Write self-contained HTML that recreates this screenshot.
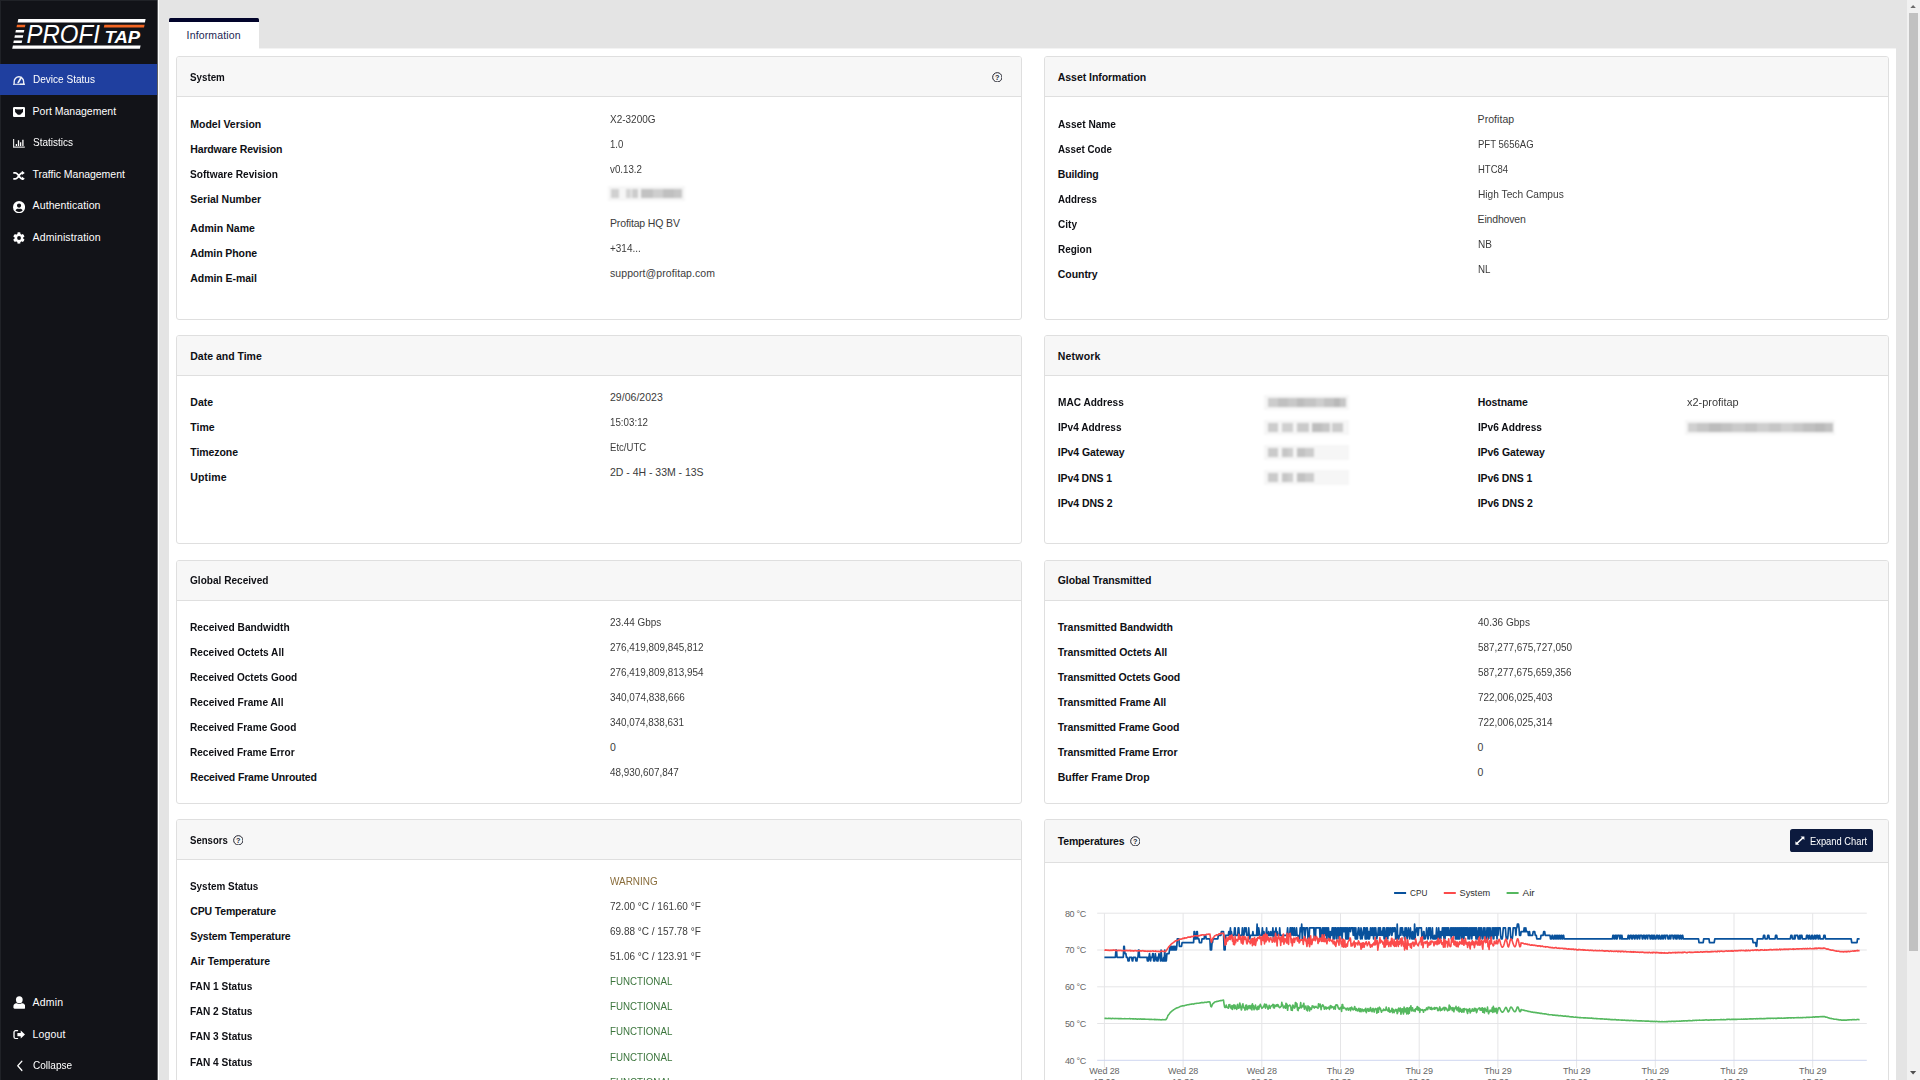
<!DOCTYPE html>
<html lang="en">
<head>
<meta charset="utf-8">
<title>Profitap - Device Status</title>
<style>
html,body{margin:0;padding:0;}
body{width:1920px;height:1080px;overflow:hidden;background:#e4e4e4;font-family:"Liberation Sans",sans-serif;font-size:10.5px;color:#333;}
#app{position:relative;width:1920px;height:1080px;overflow:hidden;background:#e4e4e4;}
.t{position:absolute;white-space:nowrap;margin:0;padding:0;font-size:10.5px;line-height:12px;height:12px;transform-origin:0 50%;}
.abs{position:absolute;}
#side{position:absolute;left:0;top:0;width:157px;height:1080px;background:#121318;box-shadow:inset 1px 1px 0 #202227;}
#sideedge{position:absolute;left:157px;top:0;width:2px;height:1080px;background:linear-gradient(90deg,#5f6063 0,#5f6063 50%,#fcfcfc 50%,#fcfcfc 100%);}
.nav{position:absolute;left:0;width:157px;height:31.5px;}
.nav.on{background:#1f3f9f;}
.nav svg{position:absolute;}
.nt{color:#fff;}
#tab{position:absolute;left:169px;top:18px;width:90px;height:31px;background:#fff;border-top:4px solid #02042b;box-sizing:border-box;border-radius:1.5px 1.5px 0 0;}
#panel{position:absolute;left:169px;top:48px;width:1727px;height:1040px;background:#fff;border-top:1px solid #f3f3f3;box-sizing:border-box;}
.card{position:absolute;box-sizing:border-box;border:1px solid #dfdfdf;border-radius:3px;background:#fff;overflow:hidden;}
.ch{position:absolute;left:0;top:0;right:0;box-sizing:border-box;background:#f7f7f7;border-bottom:1px solid #dfdfdf;}
.hd{font-weight:bold;color:#0e0f14;}
.lb{font-weight:bold;color:#0e0f14;}
.vl{color:#3b3b3b;}
.warn{color:#8a6d3b;}
.ok{color:#3c763d;}
.blur{position:absolute;filter:blur(1.3px);}
.blur i{position:absolute;display:block;background:#b9b9b9;}
#sbt{position:absolute;left:1907px;top:0;width:13px;height:1080px;background:#f1f1f1;}
#sbth{position:absolute;left:1909px;top:13px;width:9px;height:938px;background:#c1c1c1;}

</style>
</head>
<body>
<div id="app">
<div id="side">
<svg class="abs" style="left:0;top:0" width="157" height="62" viewBox="0 0 157 62">
<polygon points="18.3,19.1 145.6,19.1 144.9,22.4 17.6,22.4" fill="#fff"/>
<polygon points="12.9,45.6 140.6,45.6 139.9,48.8 12.2,48.8" fill="#fff"/>
<polygon points="17.0,24.8 25.4,24.8 24.9,27.3 16.5,27.3" fill="#f26522"/>
<polygon points="15.9,30.0 24.3,30.0 23.8,32.6 15.4,32.6" fill="#fff"/>
<polygon points="14.9,35.2 23.3,35.2 22.8,37.7 14.4,37.7" fill="#fff"/>
<polygon points="13.8,40.4 22.2,40.4 21.7,42.9 13.3,42.9" fill="#fff"/>
<polygon points="104.4,24.8 144.6,24.8 144.0,27.6 103.8,27.6" fill="#f26522"/>
<text x="26.6" y="43.2" font-family="'Liberation Sans',sans-serif" font-style="italic" font-size="25.6" fill="#fff" textLength="73.2" lengthAdjust="spacingAndGlyphs">PROFI</text>
<text x="104.6" y="42.9" font-family="'Liberation Sans',sans-serif" font-style="italic" font-weight="bold" font-size="16.6" fill="#fff" textLength="35.6" lengthAdjust="spacingAndGlyphs">TAP</text>
</svg>
<div class="nav on" style="top:63.9px;height:31.3px"></div>
<svg class="abs" style="left:13.0px;top:75.8px;opacity:0.92" width="11.8" height="9.1" viewBox="0 0 11.8 9.1" preserveAspectRatio="none"><path d="M1.15 8.3V5.7a4.75 4.95 0 0 1 9.5 0v2.6" fill="none" stroke="#fff" stroke-width="1.35"/><path d="M5.2 6.7 8.2 1.5" stroke="#fff" stroke-width="1.7" stroke-linecap="round"/><path d="M0 8.4h11.8" stroke="#fff" stroke-width="1.2" opacity=".8"/><path d="M6.6 8.3h5.2" stroke="#fff" stroke-width="1.5"/></svg><span class="t nt" style="left:32.6px;top:73px;transform:scaleX(0.956);">Device Status</span>
<svg class="abs" style="left:13.0px;top:106.8px" width="12.1" height="10.1" viewBox="0 0 12.1 10.1" preserveAspectRatio="none"><path d="M1.3 0h9.5a1.3 1.3 0 0 1 1.3 1.3v7.5a1.3 1.3 0 0 1-1.3 1.3H1.3A1.3 1.3 0 0 1 0 8.8V1.3A1.3 1.3 0 0 1 1.3 0zM2.1 2v3.1l1.5 1.5 1.3 1.2h2.3l1.3-1.2 1.5-1.5V2z" fill="#fff" fill-rule="evenodd"/><path d="M3.2 2h5.7v.9H3.2z" fill="#fff" opacity=".45"/></svg><span class="t nt" style="left:32.6px;top:105px;letter-spacing:0.00px;">Port Management</span>
<svg class="abs" style="left:13.0px;top:139.2px" width="11.8" height="8.7" viewBox="0 0 11.8 8.7" preserveAspectRatio="none"><path d="M.6 0v8.1h11.2" fill="none" stroke="#fff" stroke-width="1.2" opacity=".85"/><path d="M3.4 7.1V4.9M5.5 7.1V1.3M7.6 7.1V3.2M9.9 7.1V.8" stroke="#fff" stroke-width="1.3"/></svg><span class="t nt" style="left:32.6px;top:136px;transform:scaleX(0.955);">Statistics</span>
<svg class="abs" style="left:13.0px;top:170.5px" width="11.8" height="9.7" viewBox="0 0 11.8 9.7" preserveAspectRatio="none"><path d="M.3 1.9h1.9c1.1 0 1.7.4 2.4 1.3l2.5 3.3c.6.8 1.1 1.3 2.1 1.3h.5M.3 7.8h1.9c1.1 0 1.7-.4 2.4-1.3l2.5-3.3c.6-.8 1.1-1.3 2.1-1.3h.5" fill="none" stroke="#fff" stroke-width="1.8"/><path d="M8.8 -.3l3 2.2-3 2.2zM8.8 5.6l3 2.2-3 2.2z" fill="#fff"/></svg><span class="t nt" style="left:32.6px;top:168px;letter-spacing:-0.03px;">Traffic Management</span>
<svg class="abs" style="left:13.0px;top:200.5px" width="12.1" height="12.3" viewBox="0 0 24 24" preserveAspectRatio="none"><path d="M12 0a12 12 0 1 0 0 24 12 12 0 0 0 0-24zm0 4.7a4.2 4.2 0 1 1 0 8.4 4.2 4.2 0 0 1 0-8.4zm0 16.6c-2.9 0-5.4-1.3-7.1-3.3.9-1.7 2.7-2.9 4.8-2.9.1 0 .2 0 .4.1.6.2 1.2.3 1.9.3s1.3-.1 1.9-.3c.1 0 .2-.1.4-.1 2.1 0 3.9 1.2 4.8 2.9-1.7 2-4.2 3.3-7.1 3.3z" fill="#fff" fill-rule="evenodd"/></svg><span class="t nt" style="left:32.6px;top:199px;letter-spacing:0.10px;">Authentication</span>
<svg class="abs" style="left:13.0px;top:232.2px" width="12.1" height="12.0" viewBox="0 0 24 24" preserveAspectRatio="none"><path d="M22.3 14.6l-2-1.1c.2-1 .2-2 0-3l2-1.1c.2-.1.3-.4.3-.7-.5-1.7-1.4-3.2-2.6-4.4-.2-.2-.5-.2-.7-.1l-2 1.1c-.8-.7-1.7-1.2-2.6-1.5V1.5c0-.3-.2-.5-.4-.6-1.7-.4-3.4-.4-5.1 0-.3.1-.4.3-.4.6v2.3c-1 .3-1.9.9-2.6 1.5l-2-1.1c-.2-.1-.5-.1-.7.1C2.2 5.5 1.3 7 .8 8.7c-.1.3 0 .5.3.7l2 1.1c-.2 1-.2 2 0 3l-2 1.1c-.2.1-.3.4-.3.7.5 1.7 1.4 3.2 2.6 4.4.2.2.5.2.7.1l2-1.1c.8.7 1.7 1.2 2.6 1.5v2.3c0 .3.2.5.4.6 1.7.4 3.4.4 5.1 0 .3-.1.4-.3.4-.6v-2.3c1-.3 1.9-.9 2.6-1.5l2 1.1c.2.1.5.1.7-.1 1.2-1.3 2.1-2.8 2.6-4.4.1-.3 0-.6-.2-.7zM12 15.8a3.8 3.8 0 1 1 0-7.6 3.8 3.8 0 0 1 0 7.6z" fill="#fff" fill-rule="evenodd"/></svg><span class="t nt" style="left:32.6px;top:231px;letter-spacing:0.11px;">Administration</span>
<svg class="abs" style="left:12.8px;top:996.0px" width="12.6" height="13.0" viewBox="0 0 24 24" preserveAspectRatio="none"><ellipse cx="12" cy="7" rx="6.4" ry="6.6" fill="#fff"/><path d="M.8 21.4v-2.2c0-3.1 2.5-5.6 5.6-5.6h.8c1.5.7 3.1 1 4.8 1s3.3-.3 4.8-1h.8c3.1 0 5.6 2.5 5.6 5.6v2.2c0 1.2-1 2.2-2.2 2.2H3c-1.2 0-2.2-1-2.2-2.2z" fill="#fff"/></svg><span class="t nt" style="left:32.6px;top:996px;letter-spacing:0.16px;">Admin</span>
<svg class="abs" style="left:13.0px;top:1028.6px" width="12.2" height="11.2" viewBox="0 0 24 24" preserveAspectRatio="none"><path d="M9 3.6H5.2A3.2 3.2 0 0 0 2 6.8v10.4a3.2 3.2 0 0 0 3.2 3.2H9" fill="none" stroke="#fff" stroke-width="2.6" stroke-linecap="round"/><path d="M15.2 3.4 23.6 12l-8.4 8.6v-5H8.6V8.4h6.6z" fill="#fff"/></svg><span class="t nt" style="left:32.6px;top:1028px;letter-spacing:0.16px;">Logout</span>
<svg class="abs" style="left:14.6px;top:1060.4px" width="9.4" height="11.6" viewBox="0 0 24 24" preserveAspectRatio="none"><path d="M17.5 2.5 7 12l10.5 9.5" fill="none" stroke="#fff" stroke-width="3.2" stroke-linecap="round" stroke-linejoin="round"/></svg><span class="t nt" style="left:32.6px;top:1059px;transform:scaleX(0.957);">Collapse</span>
</div>
<div id="sideedge"></div>
<div id="panel"></div>
<div id="tab"></div>
<span class="t" style="left:186.6px;top:29px;color:#1d2553;letter-spacing:0.15px;">Information</span>
<div class="card" style="left:176px;top:56px;width:846px;height:264px"><div class="ch" style="height:40px"></div></div>
<span class="t hd" style="left:190.3px;top:71px;transform:scaleX(0.932);">System</span>
<svg class="abs" style="left:991.7px;top:71.7px" width="10.6" height="10.6" viewBox="0 0 21.2 21.2"><circle cx="10.6" cy="10.6" r="9.3" fill="none" stroke="#23242f" stroke-width="2"/><text x="10.6" y="15.9" text-anchor="middle" font-family="'Liberation Sans',sans-serif" font-weight="bold" font-size="14.6" fill="#23242f">?</text></svg>
<span class="t lb" style="left:190.3px;top:118px;letter-spacing:-0.02px;">Model Version</span><span class="t vl" style="left:610.0px;top:113px;transform:scaleX(0.951);">X2-3200G</span>
<span class="t lb" style="left:190.3px;top:143px;letter-spacing:-0.15px;">Hardware Revision</span><span class="t vl" style="left:610.0px;top:138px;transform:scaleX(0.911);">1.0</span>
<span class="t lb" style="left:190.3px;top:168px;transform:scaleX(0.967);">Software Revision</span><span class="t vl" style="left:610.0px;top:163px;transform:scaleX(0.929);">v0.13.2</span>
<span class="t lb" style="left:190.3px;top:193px;letter-spacing:-0.03px;">Serial Number</span><div class="blur" style="left:608px;top:186.1px;width:77px;height:15px"><i style="left:0;top:0;width:77px;height:15px;background:#f6f6f6"></i><i style="left:2.6px;top:3.4px;width:8.0px;height:8.6px;background:rgb(208,208,208)"></i><i style="left:18.3px;top:3.4px;width:5.2px;height:8.6px;background:rgb(212,212,212)"></i><i style="left:23.5px;top:3.4px;width:6.3px;height:8.6px;background:rgb(204,204,204)"></i><i style="left:33.3px;top:3.4px;width:11.7px;height:8.6px;background:rgb(194,194,194)"></i><i style="left:45.0px;top:3.4px;width:10.0px;height:8.6px;background:rgb(206,206,206)"></i><i style="left:55.0px;top:3.4px;width:11.0px;height:8.6px;background:rgb(192,192,192)"></i><i style="left:66.0px;top:3.4px;width:8.4px;height:8.6px;background:rgb(198,198,198)"></i></div>
<span class="t lb" style="left:190.3px;top:222px;letter-spacing:0.05px;">Admin Name</span><span class="t vl" style="left:610.0px;top:217px;letter-spacing:-0.14px;">Profitap HQ BV</span>
<span class="t lb" style="left:190.3px;top:247px;letter-spacing:-0.09px;">Admin Phone</span><span class="t vl" style="left:610.0px;top:242px;transform:scaleX(0.948);">+314...</span>
<span class="t lb" style="left:190.3px;top:272px;letter-spacing:-0.05px;">Admin E-mail</span><span class="t vl" style="left:610.0px;top:267px;letter-spacing:0.08px;">support@profitap.com</span>
<div class="card" style="left:1044px;top:56px;width:845px;height:264px"><div class="ch" style="height:40px"></div></div>
<span class="t hd" style="left:1057.8px;top:71px;letter-spacing:-0.05px;">Asset Information</span>
<span class="t lb" style="left:1057.8px;top:118px;transform:scaleX(0.965);">Asset Name</span><span class="t vl" style="left:1477.6px;top:113px;letter-spacing:0.06px;">Profitap</span>
<span class="t lb" style="left:1057.8px;top:143px;transform:scaleX(0.933);">Asset Code</span><span class="t vl" style="left:1477.6px;top:138px;transform:scaleX(0.910);">PFT 5656AG</span>
<span class="t lb" style="left:1057.8px;top:168px;letter-spacing:-0.17px;">Building</span><span class="t vl" style="left:1477.6px;top:163px;transform:scaleX(0.905);">HTC84</span>
<span class="t lb" style="left:1057.8px;top:193px;transform:scaleX(0.926);">Address</span><span class="t vl" style="left:1477.6px;top:188px;transform:scaleX(0.969);">High Tech Campus</span>
<span class="t lb" style="left:1057.8px;top:218px;transform:scaleX(0.958);">City</span><span class="t vl" style="left:1477.6px;top:213px;letter-spacing:-0.18px;">Eindhoven</span>
<span class="t lb" style="left:1057.8px;top:243px;transform:scaleX(0.950);">Region</span><span class="t vl" style="left:1477.6px;top:238px;transform:scaleX(0.953);">NB</span>
<span class="t lb" style="left:1057.8px;top:268px;letter-spacing:-0.06px;">Country</span><span class="t vl" style="left:1477.6px;top:263px;transform:scaleX(0.931);">NL</span>
<div class="card" style="left:176px;top:335px;width:846px;height:209px"><div class="ch" style="height:40px"></div></div>
<span class="t hd" style="left:190.3px;top:350px;letter-spacing:-0.01px;">Date and Time</span>
<span class="t lb" style="left:190.3px;top:396px;letter-spacing:0.05px;">Date</span><span class="t vl" style="left:610.0px;top:391px;letter-spacing:0.02px;">29/06/2023</span>
<span class="t lb" style="left:190.3px;top:421px;letter-spacing:-0.01px;">Time</span><span class="t vl" style="left:610.0px;top:416px;transform:scaleX(0.930);">15:03:12</span>
<span class="t lb" style="left:190.3px;top:446px;letter-spacing:-0.08px;">Timezone</span><span class="t vl" style="left:610.0px;top:441px;transform:scaleX(0.913);">Etc/UTC</span>
<span class="t lb" style="left:190.3px;top:471px;letter-spacing:0.12px;">Uptime</span><span class="t vl" style="left:610.0px;top:466px;letter-spacing:-0.02px;">2D - 4H - 33M - 13S</span>
<div class="card" style="left:1044px;top:335px;width:845px;height:209px"><div class="ch" style="height:40px"></div></div>
<span class="t hd" style="left:1057.8px;top:350px;letter-spacing:0.20px;">Network</span>
<span class="t lb" style="left:1057.8px;top:396px;transform:scaleX(0.961);">MAC Address</span><div class="blur" style="left:1264px;top:394.8px;width:85px;height:15px"><i style="left:0;top:0;width:85px;height:15px;background:#f6f6f6"></i><i style="left:3.5px;top:3.4px;width:10.5px;height:8.6px;background:rgb(204,204,204)"></i><i style="left:14.0px;top:3.4px;width:10.0px;height:8.6px;background:rgb(192,192,192)"></i><i style="left:24.0px;top:3.4px;width:9.0px;height:8.6px;background:rgb(200,200,200)"></i><i style="left:33.0px;top:3.4px;width:7.0px;height:8.6px;background:rgb(188,188,188)"></i><i style="left:40.0px;top:3.4px;width:12.0px;height:8.6px;background:rgb(196,196,196)"></i><i style="left:52.0px;top:3.4px;width:8.0px;height:8.6px;background:rgb(206,206,206)"></i><i style="left:60.0px;top:3.4px;width:10.0px;height:8.6px;background:rgb(194,194,194)"></i><i style="left:70.0px;top:3.4px;width:6.0px;height:8.6px;background:rgb(184,184,184)"></i><i style="left:76.0px;top:3.4px;width:5.5px;height:8.6px;background:rgb(198,198,198)"></i></div>
<span class="t lb" style="left:1057.8px;top:421px;transform:scaleX(0.960);">IPv4 Address</span><div class="blur" style="left:1264px;top:419.9px;width:85px;height:15px"><i style="left:0;top:0;width:85px;height:15px;background:#f6f6f6"></i><i style="left:3.5px;top:3.4px;width:10.7px;height:8.6px;background:rgb(204,204,204)"></i><i style="left:17.7px;top:3.4px;width:11.5px;height:8.6px;background:rgb(208,208,208)"></i><i style="left:32.8px;top:3.4px;width:12.4px;height:8.6px;background:rgb(202,202,202)"></i><i style="left:47.8px;top:3.4px;width:10.2px;height:8.6px;background:rgb(190,190,190)"></i><i style="left:58.0px;top:3.4px;width:8.4px;height:8.6px;background:rgb(198,198,198)"></i><i style="left:68.2px;top:3.4px;width:10.6px;height:8.6px;background:rgb(204,204,204)"></i></div>
<span class="t lb" style="left:1057.8px;top:446px;letter-spacing:-0.08px;">IPv4 Gateway</span><div class="blur" style="left:1264px;top:445.0px;width:85px;height:15px"><i style="left:0;top:0;width:85px;height:15px;background:#f6f6f6"></i><i style="left:3.5px;top:3.4px;width:10.7px;height:8.6px;background:rgb(202,202,202)"></i><i style="left:17.7px;top:3.4px;width:6.3px;height:8.6px;background:rgb(198,198,198)"></i><i style="left:24.0px;top:3.4px;width:5.2px;height:8.6px;background:rgb(206,206,206)"></i><i style="left:32.8px;top:3.4px;width:8.2px;height:8.6px;background:rgb(194,194,194)"></i><i style="left:41.0px;top:3.4px;width:8.6px;height:8.6px;background:rgb(204,204,204)"></i></div>
<span class="t lb" style="left:1057.8px;top:472px;letter-spacing:-0.14px;">IPv4 DNS 1</span><div class="blur" style="left:1264px;top:470.1px;width:85px;height:15px"><i style="left:0;top:0;width:85px;height:15px;background:#f6f6f6"></i><i style="left:3.5px;top:3.4px;width:10.7px;height:8.6px;background:rgb(202,202,202)"></i><i style="left:17.7px;top:3.4px;width:6.3px;height:8.6px;background:rgb(198,198,198)"></i><i style="left:24.0px;top:3.4px;width:5.2px;height:8.6px;background:rgb(206,206,206)"></i><i style="left:32.8px;top:3.4px;width:8.2px;height:8.6px;background:rgb(194,194,194)"></i><i style="left:41.0px;top:3.4px;width:8.6px;height:8.6px;background:rgb(204,204,204)"></i></div>
<span class="t lb" style="left:1057.8px;top:497px;letter-spacing:-0.08px;">IPv4 DNS 2</span>
<span class="t lb" style="left:1477.7px;top:396px;letter-spacing:-0.07px;">Hostname</span><span class="t vl" style="left:1687.2px;top:396px;transform:scaleX(1.042);">x2-profitap</span>
<span class="t lb" style="left:1477.7px;top:421px;transform:scaleX(0.968);">IPv6 Address</span><div class="blur" style="left:1684.6px;top:419.9px;width:150.4px;height:15px"><i style="left:0;top:0;width:150.4px;height:15px;background:#f6f6f6"></i><i style="left:3.0px;top:3.4px;width:9.0px;height:8.6px;background:rgb(208,208,208)"></i><i style="left:12.0px;top:3.4px;width:12.0px;height:8.6px;background:rgb(198,198,198)"></i><i style="left:24.0px;top:3.4px;width:12.0px;height:8.6px;background:rgb(188,188,188)"></i><i style="left:36.0px;top:3.4px;width:11.0px;height:8.6px;background:rgb(194,194,194)"></i><i style="left:47.0px;top:3.4px;width:13.0px;height:8.6px;background:rgb(202,202,202)"></i><i style="left:60.0px;top:3.4px;width:12.0px;height:8.6px;background:rgb(196,196,196)"></i><i style="left:72.0px;top:3.4px;width:12.0px;height:8.6px;background:rgb(206,206,206)"></i><i style="left:84.0px;top:3.4px;width:12.0px;height:8.6px;background:rgb(198,198,198)"></i><i style="left:96.0px;top:3.4px;width:12.0px;height:8.6px;background:rgb(208,208,208)"></i><i style="left:108.0px;top:3.4px;width:10.0px;height:8.6px;background:rgb(200,200,200)"></i><i style="left:118.0px;top:3.4px;width:12.0px;height:8.6px;background:rgb(192,192,192)"></i><i style="left:130.0px;top:3.4px;width:10.0px;height:8.6px;background:rgb(186,186,186)"></i><i style="left:140.0px;top:3.4px;width:8.4px;height:8.6px;background:rgb(194,194,194)"></i></div>
<span class="t lb" style="left:1477.7px;top:446px;letter-spacing:-0.05px;">IPv6 Gateway</span>
<span class="t lb" style="left:1477.7px;top:472px;letter-spacing:-0.08px;">IPv6 DNS 1</span>
<span class="t lb" style="left:1477.7px;top:497px;letter-spacing:-0.03px;">IPv6 DNS 2</span>
<div class="card" style="left:176px;top:560px;width:846px;height:244px"><div class="ch" style="height:40px"></div></div>
<span class="t hd" style="left:190.3px;top:574px;transform:scaleX(0.960);">Global Received</span>
<span class="t lb" style="left:190.3px;top:621px;transform:scaleX(0.970);">Received Bandwidth</span><span class="t vl" style="left:610.0px;top:616px;transform:scaleX(0.945);">23.44 Gbps</span>
<span class="t lb" style="left:190.3px;top:646px;transform:scaleX(0.963);">Received Octets All</span><span class="t vl" style="left:610.0px;top:641px;transform:scaleX(0.942);">276,419,809,845,812</span>
<span class="t lb" style="left:190.3px;top:671px;transform:scaleX(0.957);">Received Octets Good</span><span class="t vl" style="left:610.0px;top:666px;transform:scaleX(0.942);">276,419,809,813,954</span>
<span class="t lb" style="left:190.3px;top:696px;transform:scaleX(0.969);">Received Frame All</span><span class="t vl" style="left:610.0px;top:691px;transform:scaleX(0.948);">340,074,838,666</span>
<span class="t lb" style="left:190.3px;top:721px;transform:scaleX(0.959);">Received Frame Good</span><span class="t vl" style="left:610.0px;top:716px;transform:scaleX(0.938);">340,074,838,631</span>
<span class="t lb" style="left:190.3px;top:746px;transform:scaleX(0.958);">Received Frame Error</span><span class="t vl" style="left:610.0px;top:741px;">0</span>
<span class="t lb" style="left:190.3px;top:771px;letter-spacing:-0.16px;">Received Frame Unrouted</span><span class="t vl" style="left:610.0px;top:766px;transform:scaleX(0.942);">48,930,607,847</span>
<div class="card" style="left:1044px;top:560px;width:845px;height:244px"><div class="ch" style="height:40px"></div></div>
<span class="t hd" style="left:1057.8px;top:574px;letter-spacing:-0.09px;">Global Transmitted</span>
<span class="t lb" style="left:1057.8px;top:621px;letter-spacing:-0.05px;">Transmitted Bandwidth</span><span class="t vl" style="left:1477.6px;top:616px;transform:scaleX(0.956);">40.36 Gbps</span>
<span class="t lb" style="left:1057.8px;top:646px;letter-spacing:-0.08px;">Transmitted Octets All</span><span class="t vl" style="left:1477.6px;top:641px;transform:scaleX(0.948);">587,277,675,727,050</span>
<span class="t lb" style="left:1057.8px;top:671px;letter-spacing:-0.14px;">Transmitted Octets Good</span><span class="t vl" style="left:1477.6px;top:666px;transform:scaleX(0.943);">587,277,675,659,356</span>
<span class="t lb" style="left:1057.8px;top:696px;letter-spacing:-0.07px;">Transmitted Frame All</span><span class="t vl" style="left:1477.6px;top:691px;transform:scaleX(0.946);">722,006,025,403</span>
<span class="t lb" style="left:1057.8px;top:721px;letter-spacing:-0.13px;">Transmitted Frame Good</span><span class="t vl" style="left:1477.6px;top:716px;transform:scaleX(0.946);">722,006,025,314</span>
<span class="t lb" style="left:1057.8px;top:746px;letter-spacing:-0.13px;">Transmitted Frame Error</span><span class="t vl" style="left:1477.6px;top:741px;">0</span>
<span class="t lb" style="left:1057.8px;top:771px;letter-spacing:-0.06px;">Buffer Frame Drop</span><span class="t vl" style="left:1477.6px;top:766px;">0</span>
<div class="card" style="left:176px;top:819px;width:846px;height:301px"><div class="ch" style="height:40px"></div></div>
<span class="t hd" style="left:190.3px;top:834px;transform:scaleX(0.912);">Sensors</span>
<svg class="abs" style="left:232.8px;top:834.7px" width="10.6" height="10.6" viewBox="0 0 21.2 21.2"><circle cx="10.6" cy="10.6" r="9.3" fill="none" stroke="#23242f" stroke-width="2"/><text x="10.6" y="15.9" text-anchor="middle" font-family="'Liberation Sans',sans-serif" font-weight="bold" font-size="14.6" fill="#23242f">?</text></svg>
<span class="t lb" style="left:190.3px;top:880px;transform:scaleX(0.944);">System Status</span><span class="t vl warn" style="left:610.0px;top:875px;transform:scaleX(0.947);">WARNING</span>
<span class="t lb" style="left:190.3px;top:905px;letter-spacing:-0.16px;">CPU Temperature</span><span class="t vl" style="left:610.0px;top:900px;transform:scaleX(0.952);">72.00 °C / 161.60 °F</span>
<span class="t lb" style="left:190.3px;top:930px;letter-spacing:-0.16px;">System Temperature</span><span class="t vl" style="left:610.0px;top:925px;transform:scaleX(0.952);">69.88 °C / 157.78 °F</span>
<span class="t lb" style="left:190.3px;top:955px;letter-spacing:-0.04px;">Air Temperature</span><span class="t vl" style="left:610.0px;top:950px;transform:scaleX(0.952);">51.06 °C / 123.91 °F</span>
<span class="t lb" style="left:190.3px;top:980px;transform:scaleX(0.962);">FAN 1 Status</span><span class="t vl ok" style="left:610.0px;top:975px;transform:scaleX(0.929);">FUNCTIONAL</span>
<span class="t lb" style="left:190.3px;top:1005px;transform:scaleX(0.965);">FAN 2 Status</span><span class="t vl ok" style="left:610.0px;top:1000px;transform:scaleX(0.929);">FUNCTIONAL</span>
<span class="t lb" style="left:190.3px;top:1030px;transform:scaleX(0.965);">FAN 3 Status</span><span class="t vl ok" style="left:610.0px;top:1025px;transform:scaleX(0.929);">FUNCTIONAL</span>
<span class="t lb" style="left:190.3px;top:1056px;transform:scaleX(0.965);">FAN 4 Status</span><span class="t vl ok" style="left:610.0px;top:1051px;transform:scaleX(0.929);">FUNCTIONAL</span>
<span class="t lb" style="left:190.3px;top:1081px;transform:scaleX(0.965);">FAN 5 Status</span><span class="t vl ok" style="left:610.0px;top:1076px;transform:scaleX(0.929);">FUNCTIONAL</span>
<div class="card" style="left:1044px;top:819px;width:845px;height:301px"><div class="ch" style="height:42.6px"></div></div>
<span class="t hd" style="left:1057.8px;top:835px;letter-spacing:-0.17px;">Temperatures</span>
<svg class="abs" style="left:1129.7px;top:835.5px" width="10.6" height="10.6" viewBox="0 0 21.2 21.2"><circle cx="10.6" cy="10.6" r="9.3" fill="none" stroke="#23242f" stroke-width="2"/><text x="10.6" y="15.9" text-anchor="middle" font-family="'Liberation Sans',sans-serif" font-weight="bold" font-size="14.6" fill="#23242f">?</text></svg>
<div class="abs" style="left:1789.6px;top:829.3px;width:83.3px;height:22.6px;background:#0c1a3e;border-radius:2.6px;transform:translateZ(0)"></div>
<svg class="abs" style="left:1795.3px;top:836.4px" width="9.8" height="9.2" viewBox="0 0 24 24" preserveAspectRatio="none"><path d="M13.5 1h9.5v9.5l-3.3-3.3-12.5 12.5 3.3 3.3H1v-9.5l3.3 3.3 12.5-12.5z" fill="#fff"/></svg>
<span class="t" style="left:1809.6px;top:835px;color:#fff;transform:scaleX(0.891);">Expand Chart</span>
<div id="sbt"></div><div id="sbth"></div>
<svg class="abs" style="left:1910.4px;top:5px" width="6.2" height="3.4" viewBox="0 0 6.2 3.4"><path d="M0 3.4 3.1 0l3.1 3.4z" fill="#6b6b6b"/></svg>
<svg class="abs" style="left:1910.4px;top:1071.4px" width="6.2" height="3.4" viewBox="0 0 6.2 3.4"><path d="M0 0h6.2L3.1 3.4z" fill="#505050"/></svg>
<svg class="abs" style="left:1045.0px;top:862.0px" width="843.0" height="218.0" viewBox="1045.0 862.0 843.0 218.0" font-family="'Liberation Sans',sans-serif"><g stroke="#e5e5e7" stroke-width="1" fill="none"><path d="M1097.2 913.2H1866.8"/><path d="M1097.2 950.0H1866.8"/><path d="M1097.2 986.8H1866.8"/><path d="M1097.2 1023.5H1866.8"/><path d="M1104.4 913.2V1067.8"/><path d="M1183.1 913.2V1067.8"/><path d="M1261.8 913.2V1067.8"/><path d="M1340.5 913.2V1067.8"/><path d="M1419.2 913.2V1067.8"/><path d="M1497.9 913.2V1067.8"/><path d="M1576.6 913.2V1067.8"/><path d="M1655.3 913.2V1067.8"/><path d="M1734.0 913.2V1067.8"/><path d="M1812.7 913.2V1067.8"/></g><path d="M1097.2 1060.3H1866.8" stroke="#cfd6f0" stroke-width="1" fill="none"/><text x="1086" y="916.6" text-anchor="end" font-size="9" fill="#666" letter-spacing="-0.3">80 °C</text><text x="1086" y="953.4" text-anchor="end" font-size="9" fill="#666" letter-spacing="-0.3">70 °C</text><text x="1086" y="990.1" text-anchor="end" font-size="9" fill="#666" letter-spacing="-0.3">60 °C</text><text x="1086" y="1026.9" text-anchor="end" font-size="9" fill="#666" letter-spacing="-0.3">50 °C</text><text x="1086" y="1063.7" text-anchor="end" font-size="9" fill="#666" letter-spacing="-0.3">40 °C</text><text text-anchor="middle" font-size="9" fill="#666" letter-spacing="-0.1"><tspan x="1104.4" y="1074.4">Wed 28</tspan><tspan x="1104.4" y="1085.2">17:00</tspan></text><text text-anchor="middle" font-size="9" fill="#666" letter-spacing="-0.1"><tspan x="1183.1" y="1074.4">Wed 28</tspan><tspan x="1183.1" y="1085.2">19:30</tspan></text><text text-anchor="middle" font-size="9" fill="#666" letter-spacing="-0.1"><tspan x="1261.8" y="1074.4">Wed 28</tspan><tspan x="1261.8" y="1085.2">22:00</tspan></text><text text-anchor="middle" font-size="9" fill="#666" letter-spacing="-0.1"><tspan x="1340.5" y="1074.4">Thu 29</tspan><tspan x="1340.5" y="1085.2">00:30</tspan></text><text text-anchor="middle" font-size="9" fill="#666" letter-spacing="-0.1"><tspan x="1419.2" y="1074.4">Thu 29</tspan><tspan x="1419.2" y="1085.2">03:00</tspan></text><text text-anchor="middle" font-size="9" fill="#666" letter-spacing="-0.1"><tspan x="1497.9" y="1074.4">Thu 29</tspan><tspan x="1497.9" y="1085.2">05:30</tspan></text><text text-anchor="middle" font-size="9" fill="#666" letter-spacing="-0.1"><tspan x="1576.6" y="1074.4">Thu 29</tspan><tspan x="1576.6" y="1085.2">08:00</tspan></text><text text-anchor="middle" font-size="9" fill="#666" letter-spacing="-0.1"><tspan x="1655.3" y="1074.4">Thu 29</tspan><tspan x="1655.3" y="1085.2">10:30</tspan></text><text text-anchor="middle" font-size="9" fill="#666" letter-spacing="-0.1"><tspan x="1734.0" y="1074.4">Thu 29</tspan><tspan x="1734.0" y="1085.2">13:00</tspan></text><text text-anchor="middle" font-size="9" fill="#666" letter-spacing="-0.1"><tspan x="1812.7" y="1074.4">Thu 29</tspan><tspan x="1812.7" y="1085.2">15:30</tspan></text><path d="M1394.1 893.0h12" stroke="#08519c" stroke-width="2" fill="none"/><text x="1410.0" y="896.4" font-size="9.6" fill="#2e2e2e" textLength="17.3" lengthAdjust="spacingAndGlyphs">CPU</text><path d="M1443.8 893.0h12" stroke="#fb4b4b" stroke-width="2" fill="none"/><text x="1459.5" y="896.4" font-size="9.6" fill="#2e2e2e" textLength="30.7" lengthAdjust="spacingAndGlyphs">System</text><path d="M1506.6 893.0h12" stroke="#55b85f" stroke-width="2" fill="none"/><text x="1522.5" y="896.4" font-size="9.6" fill="#2e2e2e" textLength="12.2" lengthAdjust="spacingAndGlyphs">Air</text><path d="M1104.4 957.3L1115.4 957.3L1115.9 950.0L1116.5 950.0L1117.0 957.3L1123.3 957.3L1123.8 946.3L1124.3 946.3L1124.9 953.7L1125.9 953.7L1126.4 957.3L1127.5 957.3L1128.0 961.0L1129.1 961.0L1129.6 957.3L1131.7 957.3L1132.2 961.0L1132.7 961.0L1133.3 957.3L1135.4 957.3L1135.9 961.0L1136.9 961.0L1137.5 957.3L1138.0 957.3L1138.5 950.0L1139.0 950.0L1139.6 957.3L1146.9 957.3L1147.4 961.0L1148.0 957.3L1148.5 961.0L1149.0 957.3L1149.5 953.7L1150.1 957.3L1150.6 961.0L1151.1 957.3L1152.2 957.3L1152.7 953.7L1153.2 953.7L1153.7 961.0L1154.8 961.0L1155.3 953.7L1155.8 957.3L1156.4 957.3L1156.9 961.0L1157.4 957.3L1157.9 961.0L1158.5 957.3L1159.0 953.7L1159.5 957.3L1160.0 957.3L1160.6 961.0L1161.1 950.0L1161.6 957.3L1162.1 961.0L1163.2 961.0L1163.7 957.3L1164.2 961.0L1164.8 950.0L1165.3 961.0L1166.3 961.0L1166.9 953.7L1169.0 953.7L1169.5 950.0L1170.0 946.3L1170.5 950.0L1171.1 950.0L1171.6 946.3L1172.1 950.0L1172.6 950.0L1173.1 946.3L1173.7 950.0L1174.2 946.3L1174.7 950.0L1175.2 946.3L1175.8 950.0L1176.3 950.0L1176.8 946.3L1177.3 938.9L1178.9 938.9L1179.4 946.3L1181.5 946.3L1182.1 942.6L1193.6 942.6L1194.1 931.6L1194.7 931.6L1195.2 938.9L1196.2 938.9L1196.8 931.6L1197.3 931.6L1197.8 938.9L1198.9 938.9L1199.4 942.6L1201.5 942.6L1202.0 938.9L1204.1 938.9L1204.6 935.3L1205.7 935.3L1206.2 938.9L1209.9 938.9L1210.4 950.0L1211.5 950.0L1212.0 942.6L1212.5 942.6L1213.0 938.9L1217.8 938.9L1218.3 935.3L1220.9 935.3L1221.4 931.6L1223.5 931.6L1224.1 950.0L1225.1 950.0L1225.6 935.3L1228.3 935.3L1228.8 931.6L1229.3 935.3L1229.8 935.3L1230.4 927.9L1230.9 935.3L1231.4 931.6L1231.9 935.3L1234.0 935.3L1234.6 927.9L1235.1 927.9L1235.6 935.3L1237.7 935.3L1238.2 927.9L1238.8 927.9L1239.3 935.3L1241.9 935.3L1242.4 927.9L1242.9 935.3L1244.0 935.3L1244.5 927.9L1245.0 927.9L1245.6 931.6L1246.1 927.9L1246.6 935.3L1248.2 935.3L1248.7 927.9L1249.2 935.3L1249.8 938.9L1250.3 935.3L1252.4 935.3L1252.9 931.6L1253.4 935.3L1256.6 935.3L1257.1 924.2L1257.6 935.3L1258.2 935.3L1258.7 927.9L1259.2 931.6L1259.7 935.3L1261.8 935.3L1262.4 927.9L1262.9 935.3L1263.4 935.3L1263.9 931.6L1264.5 935.3L1266.0 935.3L1266.6 927.9L1267.1 935.3L1268.1 935.3L1268.7 931.6L1269.2 935.3L1270.2 935.3L1270.8 931.6L1271.3 935.3L1272.3 935.3L1272.9 927.9L1273.4 938.9L1273.9 935.3L1274.4 931.6L1275.0 935.3L1275.5 931.6L1276.0 927.9L1276.5 935.3L1277.1 931.6L1277.6 935.3L1279.2 935.3L1279.7 927.9L1280.2 935.3L1287.0 935.3L1287.6 927.9L1288.1 935.3L1289.7 935.3L1290.2 927.9L1291.2 927.9L1291.8 935.3L1292.3 927.9L1292.8 927.9L1293.3 935.3L1293.9 935.3L1294.4 927.9L1294.9 935.3L1296.0 935.3L1296.5 927.9L1297.0 935.3L1298.1 935.3L1298.6 938.9L1299.6 938.9L1300.2 927.9L1300.7 927.9L1301.2 931.6L1301.7 924.2L1302.3 938.9L1302.8 927.9L1304.4 927.9L1304.9 938.9L1305.4 931.6L1305.9 927.9L1307.5 927.9L1308.0 938.9L1309.1 938.9L1309.6 927.9L1313.8 927.9L1314.3 938.9L1314.8 927.9L1315.4 938.9L1315.9 927.9L1319.6 927.9L1320.1 938.9L1320.6 927.9L1321.1 935.3L1321.7 938.9L1322.2 931.6L1322.7 927.9L1323.2 938.9L1323.8 927.9L1324.3 938.9L1324.8 927.9L1325.3 927.9L1325.9 935.3L1326.4 927.9L1326.9 938.9L1327.4 927.9L1328.0 935.3L1328.5 927.9L1329.0 938.9L1329.5 931.6L1330.1 938.9L1330.6 931.6L1331.1 935.3L1331.6 935.3L1332.2 927.9L1332.7 927.9L1333.2 938.9L1333.7 927.9L1334.3 938.9L1334.8 927.9L1335.8 927.9L1336.4 938.9L1336.9 938.9L1337.4 927.9L1337.9 935.3L1338.5 927.9L1339.0 938.9L1339.5 935.3L1340.0 927.9L1340.6 927.9L1341.1 935.3L1341.6 927.9L1342.1 938.9L1342.7 927.9L1343.2 927.9L1343.7 931.6L1344.2 927.9L1344.8 931.6L1345.3 927.9L1345.8 938.9L1346.3 927.9L1346.9 938.9L1347.4 927.9L1347.9 938.9L1348.4 938.9L1349.0 927.9L1350.0 927.9L1350.5 931.6L1351.1 927.9L1352.6 927.9L1353.2 935.3L1353.7 927.9L1354.2 935.3L1354.7 927.9L1355.3 938.9L1355.8 927.9L1356.3 938.9L1357.4 938.9L1357.9 931.6L1358.4 927.9L1358.9 927.9L1359.5 935.3L1360.0 931.6L1360.5 938.9L1361.0 927.9L1361.6 931.6L1362.1 938.9L1362.6 935.3L1363.1 935.3L1363.7 927.9L1364.7 927.9L1365.2 938.9L1365.8 938.9L1366.3 927.9L1366.8 938.9L1367.3 927.9L1367.9 935.3L1368.4 938.9L1368.9 931.6L1369.4 938.9L1370.0 935.3L1370.5 927.9L1371.0 931.6L1371.5 935.3L1372.1 927.9L1372.6 935.3L1373.1 927.9L1373.6 938.9L1374.2 931.6L1374.7 927.9L1375.2 935.3L1375.7 927.9L1376.3 935.3L1376.8 938.9L1377.3 935.3L1377.8 935.3L1378.4 927.9L1378.9 935.3L1379.4 927.9L1379.9 935.3L1380.4 927.9L1381.0 935.3L1381.5 931.6L1382.0 931.6L1382.5 935.3L1383.1 927.9L1383.6 927.9L1384.1 938.9L1384.6 927.9L1385.2 938.9L1385.7 938.9L1386.2 935.3L1386.7 927.9L1387.3 927.9L1387.8 938.9L1388.3 927.9L1388.8 935.3L1389.4 935.3L1389.9 927.9L1390.4 931.6L1390.9 927.9L1391.5 935.3L1392.0 935.3L1392.5 927.9L1393.0 927.9L1393.6 931.6L1394.1 927.9L1395.1 927.9L1395.7 938.9L1396.2 935.3L1396.7 938.9L1397.2 924.2L1397.8 938.9L1398.3 935.3L1398.8 938.9L1399.3 935.3L1399.9 935.3L1400.4 927.9L1400.9 935.3L1401.4 927.9L1402.5 927.9L1403.0 935.3L1403.5 935.3L1404.1 931.6L1404.6 938.9L1405.1 927.9L1405.6 935.3L1406.2 927.9L1406.7 935.3L1407.2 938.9L1407.7 935.3L1408.3 927.9L1408.8 931.6L1409.3 935.3L1409.8 938.9L1410.4 927.9L1410.9 935.3L1411.4 935.3L1411.9 938.9L1412.5 931.6L1413.0 938.9L1413.5 935.3L1414.0 938.9L1414.6 924.2L1415.1 938.9L1415.6 931.6L1416.1 931.6L1416.7 927.9L1417.2 927.9L1417.7 935.3L1418.2 935.3L1418.8 927.9L1421.4 927.9L1421.9 938.9L1423.0 938.9L1423.5 931.6L1424.0 931.6L1424.5 938.9L1425.1 938.9L1425.6 935.3L1426.1 935.3L1426.6 927.9L1427.2 935.3L1427.7 938.9L1428.2 938.9L1428.7 927.9L1429.3 935.3L1429.8 927.9L1430.3 927.9L1430.8 938.9L1431.4 935.3L1431.9 935.3L1432.4 927.9L1432.9 938.9L1434.0 938.9L1434.5 935.3L1435.0 938.9L1435.6 938.9L1436.1 935.3L1436.6 927.9L1437.1 938.9L1438.2 938.9L1438.7 927.9L1439.2 938.9L1439.8 931.6L1440.3 931.6L1440.8 938.9L1441.3 931.6L1441.9 935.3L1442.4 927.9L1442.9 935.3L1443.4 927.9L1444.0 938.9L1444.5 927.9L1445.0 938.9L1445.5 927.9L1446.1 935.3L1446.6 927.9L1447.1 935.3L1447.6 927.9L1448.1 935.3L1448.7 927.9L1449.2 935.3L1449.7 931.6L1450.2 935.3L1450.8 927.9L1451.3 938.9L1451.8 927.9L1452.3 935.3L1452.9 927.9L1453.4 935.3L1453.9 927.9L1454.4 935.3L1455.0 927.9L1455.5 938.9L1456.0 927.9L1456.5 938.9L1457.1 927.9L1457.6 938.9L1458.1 927.9L1458.6 938.9L1459.2 927.9L1459.7 938.9L1460.2 927.9L1460.7 935.3L1461.3 927.9L1461.8 938.9L1462.3 927.9L1462.8 938.9L1463.4 927.9L1463.9 938.9L1464.4 927.9L1464.9 935.3L1465.5 927.9L1466.0 935.3L1466.5 927.9L1467.0 935.3L1467.6 927.9L1468.1 938.9L1468.6 935.3L1469.1 927.9L1469.7 938.9L1470.2 927.9L1470.7 935.3L1471.2 927.9L1471.8 938.9L1472.3 927.9L1472.8 935.3L1473.3 927.9L1473.9 935.3L1474.4 927.9L1474.9 935.3L1475.4 927.9L1476.0 938.9L1476.5 927.9L1477.0 938.9L1477.5 931.6L1478.1 938.9L1478.6 927.9L1479.1 938.9L1479.6 927.9L1480.2 938.9L1480.7 927.9L1481.2 935.3L1481.7 927.9L1482.3 938.9L1482.8 931.6L1483.3 935.3L1483.8 927.9L1484.4 938.9L1484.9 927.9L1485.4 938.9L1485.9 931.6L1486.5 938.9L1487.0 927.9L1487.5 935.3L1488.0 927.9L1488.6 938.9L1489.1 927.9L1489.6 935.3L1490.1 927.9L1490.7 938.9L1491.2 931.6L1491.7 938.9L1492.2 927.9L1492.8 935.3L1493.3 927.9L1493.8 938.9L1494.3 927.9L1494.9 935.3L1495.4 927.9L1495.9 935.3L1496.4 927.9L1497.0 938.9L1497.5 927.9L1498.0 935.3L1498.5 927.9L1500.1 927.9L1500.6 935.3L1501.2 938.9L1502.2 938.9L1502.7 935.3L1503.3 927.9L1505.4 927.9L1505.9 935.3L1506.4 938.9L1507.5 938.9L1508.0 935.3L1508.5 927.9L1510.1 927.9L1510.6 935.3L1511.1 938.9L1512.2 938.9L1512.7 935.3L1513.2 927.9L1515.3 927.9L1515.9 935.3L1516.4 927.9L1516.9 927.9L1517.4 924.2L1518.5 924.2L1519.0 927.9L1519.5 935.3L1520.6 935.3L1521.1 931.6L1523.7 931.6L1524.2 927.9L1524.8 931.6L1525.3 931.6L1525.8 927.9L1526.3 931.6L1527.9 931.6L1528.4 935.3L1529.0 935.3L1529.5 931.6L1530.0 935.3L1532.6 935.3L1533.2 931.6L1534.7 931.6L1535.3 935.3L1536.3 935.3L1536.8 938.9L1540.5 938.9L1541.0 935.3L1543.1 935.3L1543.7 931.6L1544.7 931.6L1545.2 935.3L1550.0 935.3L1550.5 938.9L1551.5 938.9L1552.1 935.3L1552.6 935.3L1553.1 938.9L1554.2 938.9L1554.7 935.3L1555.2 935.3L1555.7 938.9L1556.3 938.9L1556.8 935.3L1557.3 935.3L1557.8 938.9L1558.4 938.9L1558.9 935.3L1559.4 935.3L1559.9 938.9L1560.5 938.9L1561.0 935.3L1561.5 935.3L1562.0 938.9L1562.6 938.9L1563.1 935.3L1563.6 935.3L1564.1 938.9L1612.4 938.9L1612.9 935.3L1613.5 935.3L1614.0 938.9L1614.5 938.9L1615.0 935.3L1615.6 935.3L1616.1 938.9L1616.6 935.3L1617.1 938.9L1617.7 935.3L1619.2 935.3L1619.8 938.9L1620.3 935.3L1620.8 935.3L1621.3 938.9L1621.9 935.3L1622.4 938.9L1627.6 938.9L1628.2 935.3L1628.7 935.3L1629.2 938.9L1629.7 938.9L1630.3 935.3L1631.3 935.3L1631.8 938.9L1632.4 938.9L1632.9 935.3L1633.9 935.3L1634.5 938.9L1635.0 938.9L1635.5 935.3L1636.6 935.3L1637.1 938.9L1637.6 938.9L1638.1 935.3L1639.2 935.3L1639.7 938.9L1640.2 935.3L1641.8 935.3L1642.3 938.9L1642.9 938.9L1643.4 935.3L1644.4 935.3L1645.0 938.9L1645.5 938.9L1646.0 935.3L1647.1 935.3L1647.6 938.9L1648.1 935.3L1649.7 935.3L1650.2 938.9L1650.7 938.9L1651.3 935.3L1651.8 935.3L1652.3 938.9L1652.8 935.3L1653.4 938.9L1653.9 935.3L1654.4 935.3L1654.9 938.9L1656.0 938.9L1656.5 935.3L1657.5 935.3L1658.1 938.9L1658.6 938.9L1659.1 935.3L1659.6 935.3L1660.2 938.9L1661.2 938.9L1661.7 935.3L1662.3 935.3L1662.8 938.9L1663.3 938.9L1663.8 935.3L1664.9 935.3L1665.4 938.9L1665.9 935.3L1667.5 935.3L1668.0 938.9L1669.1 938.9L1669.6 935.3L1670.1 935.3L1670.7 938.9L1671.2 935.3L1672.8 935.3L1673.3 938.9L1673.8 938.9L1674.3 935.3L1675.4 935.3L1675.9 938.9L1676.4 935.3L1677.0 938.9L1677.5 935.3L1678.5 935.3L1679.1 938.9L1679.6 938.9L1680.1 935.3L1680.6 935.3L1681.2 938.9L1681.7 938.9L1682.2 935.3L1682.7 935.3L1683.3 938.9L1698.5 938.9L1699.0 942.6L1703.2 942.6L1703.7 938.9L1709.0 938.9L1709.5 942.6L1714.2 942.6L1714.8 938.9L1752.5 938.9L1753.1 942.6L1755.7 942.6L1756.2 946.3L1756.7 946.3L1757.3 938.9L1763.0 938.9L1763.6 935.3L1764.6 935.3L1765.1 938.9L1767.2 938.9L1767.8 935.3L1768.8 935.3L1769.3 938.9L1775.1 938.9L1775.6 935.3L1776.7 935.3L1777.2 938.9L1790.3 938.9L1790.9 935.3L1791.9 935.3L1792.4 938.9L1794.0 938.9L1794.5 935.3L1795.0 938.9L1795.6 935.3L1797.7 935.3L1798.2 938.9L1799.2 938.9L1799.8 935.3L1800.3 938.9L1800.8 935.3L1801.9 935.3L1802.4 938.9L1806.1 938.9L1806.6 935.3L1807.6 935.3L1808.2 938.9L1808.7 938.9L1809.2 935.3L1809.7 935.3L1810.3 938.9L1811.3 938.9L1811.8 935.3L1812.4 935.3L1812.9 938.9L1813.9 938.9L1814.5 935.3L1815.0 935.3L1815.5 938.9L1816.0 938.9L1816.6 935.3L1817.6 935.3L1818.1 938.9L1818.7 938.9L1819.2 935.3L1819.7 935.3L1820.2 938.9L1823.4 938.9L1823.9 935.3L1825.0 935.3L1825.5 938.9L1851.2 938.9L1851.7 942.6L1857.0 942.6L1857.5 938.9L1859.6 938.9" fill="none" stroke="#08519c" stroke-width="1.7" stroke-linejoin="round"/><path d="M1104.4 950.1L1104.9 950.2L1105.4 949.9L1106.0 950.3L1106.5 950.0L1107.0 950.1L1107.5 950.4L1108.1 950.1L1108.6 950.4L1109.1 950.2L1109.6 950.4L1110.2 950.4L1110.7 950.2L1111.2 950.0L1111.7 950.4L1112.3 950.4L1112.8 950.1L1113.3 949.9L1113.8 950.2L1114.4 950.3L1114.9 950.0L1115.4 950.6L1115.9 950.1L1116.5 950.5L1117.0 950.6L1117.5 950.6L1118.0 950.5L1118.6 950.2L1119.1 950.6L1119.6 950.4L1120.1 950.3L1120.7 950.5L1121.2 950.4L1121.7 950.8L1122.2 950.8L1122.8 950.7L1123.3 950.4L1123.8 950.6L1124.3 950.7L1124.9 950.5L1125.4 950.6L1125.9 950.7L1126.4 950.4L1127.0 950.5L1127.5 950.8L1128.0 950.6L1128.5 950.7L1129.1 950.4L1129.6 950.5L1130.1 950.9L1130.6 950.4L1131.2 951.0L1131.7 950.8L1132.2 950.6L1132.7 951.0L1133.3 950.8L1133.8 951.1L1134.3 950.7L1134.8 950.6L1135.4 950.8L1135.9 950.6L1136.4 951.0L1136.9 950.7L1137.5 950.8L1138.0 950.8L1138.5 950.9L1139.0 950.7L1139.6 950.6L1140.1 950.9L1140.6 950.8L1141.1 951.2L1141.7 950.8L1142.2 950.9L1142.7 950.6L1143.2 950.8L1143.8 951.1L1144.3 951.1L1144.8 950.9L1145.3 951.3L1145.9 951.1L1146.4 951.3L1146.9 951.3L1147.4 951.4L1148.0 950.9L1148.5 951.3L1149.0 951.3L1149.5 951.2L1150.1 950.9L1150.6 951.4L1151.1 951.2L1151.6 951.1L1152.2 950.9L1152.7 951.0L1153.2 950.9L1153.7 951.3L1154.3 951.3L1154.8 951.3L1155.3 951.0L1155.8 950.9L1156.4 951.5L1156.9 951.5L1157.4 951.4L1157.9 951.5L1158.5 951.3L1159.0 951.2L1159.5 951.5L1160.0 951.7L1160.6 951.4L1161.1 951.4L1161.6 951.3L1162.1 951.1L1162.7 951.3L1163.2 951.4L1163.7 951.3L1164.2 951.3L1164.8 951.7L1165.3 951.2L1165.8 951.3L1166.3 950.6L1166.9 949.7L1167.4 949.0L1167.9 948.0L1168.4 947.5L1169.0 946.5L1169.5 946.2L1170.0 945.6L1170.5 944.9L1171.1 944.3L1171.6 943.8L1172.1 943.6L1172.6 943.2L1173.1 942.7L1173.7 942.4L1174.2 941.8L1174.7 941.7L1175.2 940.8L1175.8 940.8L1176.3 940.9L1176.8 940.6L1177.3 940.4L1177.9 940.2L1178.4 940.1L1178.9 939.5L1179.4 939.2L1180.0 939.3L1180.5 939.1L1181.0 939.2L1181.5 939.0L1182.1 938.7L1182.6 938.6L1183.1 938.1L1183.6 938.5L1184.2 938.5L1184.7 937.7L1185.2 937.9L1185.7 938.1L1186.3 937.7L1186.8 937.9L1187.3 937.5L1187.8 937.1L1188.4 937.1L1188.9 937.1L1189.4 937.3L1189.9 937.1L1190.5 937.1L1191.0 936.6L1191.5 936.7L1192.0 936.4L1192.6 936.6L1193.1 936.6L1193.6 936.1L1194.1 935.8L1194.7 935.8L1195.2 935.8L1195.7 935.7L1196.2 935.7L1196.8 936.0L1197.3 935.7L1197.8 935.8L1198.3 935.9L1198.9 935.8L1199.4 935.6L1199.9 935.6L1200.4 935.2L1201.0 935.0L1201.5 935.2L1202.0 934.9L1202.5 934.8L1203.1 934.7L1203.6 935.0L1204.1 935.1L1204.6 935.0L1205.2 935.0L1205.7 934.9L1206.2 934.5L1206.7 934.3L1207.3 934.3L1207.8 934.4L1208.3 934.3L1208.8 934.1L1209.4 934.5L1209.9 934.1L1210.4 937.2L1210.9 940.3L1211.5 942.3L1212.0 940.7L1212.5 939.1L1213.0 938.0L1213.6 937.6L1214.1 936.6L1214.6 935.8L1215.1 935.7L1215.7 935.5L1216.2 934.9L1216.7 934.9L1217.2 935.0L1217.8 934.9L1218.3 934.7L1218.8 934.0L1219.3 933.8L1219.9 934.1L1220.4 933.5L1220.9 933.3L1221.4 933.4L1222.0 933.5L1222.5 933.3L1223.0 933.4L1223.5 933.4L1224.1 936.3L1224.6 939.2L1225.1 945.2L1225.6 940.3L1226.2 944.1L1226.7 937.2L1227.2 938.5L1227.7 940.9L1228.3 939.4L1228.8 937.1L1229.3 939.1L1229.8 935.8L1230.4 939.5L1230.9 936.6L1231.4 935.3L1231.9 935.0L1232.5 941.2L1233.0 937.0L1233.5 944.5L1234.0 942.3L1234.6 944.8L1235.1 936.4L1235.6 942.8L1236.1 939.4L1236.7 939.9L1237.2 939.5L1237.7 941.1L1238.2 938.7L1238.8 934.3L1239.3 939.3L1239.8 937.9L1240.3 936.5L1240.9 940.0L1241.4 943.0L1241.9 941.0L1242.4 936.3L1242.9 944.1L1243.5 941.1L1244.0 936.5L1244.5 937.2L1245.0 939.4L1245.6 937.1L1246.1 939.0L1246.6 942.8L1247.1 943.9L1247.7 941.2L1248.2 936.8L1248.7 941.0L1249.2 942.0L1249.8 941.6L1250.3 943.7L1250.8 939.8L1251.3 942.7L1251.9 938.5L1252.4 945.7L1252.9 938.6L1253.4 941.2L1254.0 944.7L1254.5 937.5L1255.0 940.2L1255.5 945.4L1256.1 941.8L1256.6 938.7L1257.1 940.7L1257.6 937.5L1258.2 937.6L1258.7 937.8L1259.2 938.7L1259.7 936.1L1260.3 937.8L1260.8 938.4L1261.3 944.7L1261.8 937.3L1262.4 936.3L1262.9 940.3L1263.4 940.7L1263.9 934.7L1264.5 943.9L1265.0 938.4L1265.5 933.6L1266.0 941.8L1266.6 937.8L1267.1 934.9L1267.6 939.9L1268.1 938.2L1268.7 937.3L1269.2 941.8L1269.7 939.8L1270.2 938.8L1270.8 937.5L1271.3 939.7L1271.8 940.1L1272.3 942.2L1272.9 940.5L1273.4 937.2L1273.9 939.3L1274.4 941.9L1275.0 941.9L1275.5 933.3L1276.0 936.5L1276.5 937.8L1277.1 945.9L1277.6 937.9L1278.1 938.2L1278.6 934.8L1279.2 938.4L1279.7 939.8L1280.2 938.1L1280.7 945.4L1281.3 936.5L1281.8 938.6L1282.3 941.8L1282.8 935.5L1283.4 934.0L1283.9 944.1L1284.4 941.8L1284.9 938.7L1285.5 939.1L1286.0 941.0L1286.5 942.9L1287.0 933.4L1287.6 936.2L1288.1 943.7L1288.6 944.3L1289.1 933.8L1289.7 936.3L1290.2 933.4L1290.7 936.9L1291.2 942.8L1291.8 938.8L1292.3 946.0L1292.8 942.4L1293.3 940.0L1293.9 938.0L1294.4 942.4L1294.9 940.3L1295.4 938.2L1296.0 938.5L1296.5 937.6L1297.0 939.2L1297.5 941.1L1298.1 937.2L1298.6 939.8L1299.1 942.9L1299.6 942.3L1300.2 940.1L1300.7 940.5L1301.2 939.5L1301.7 940.1L1302.3 939.5L1302.8 940.6L1303.3 944.5L1303.8 938.8L1304.4 936.6L1304.9 938.8L1305.4 940.9L1305.9 938.8L1306.5 943.4L1307.0 946.5L1307.5 940.1L1308.0 943.3L1308.6 938.0L1309.1 943.8L1309.6 946.7L1310.1 943.6L1310.6 935.7L1311.2 941.6L1311.7 944.5L1312.2 942.7L1312.7 939.0L1313.3 939.1L1313.8 940.1L1314.3 936.4L1314.8 938.6L1315.4 940.7L1315.9 939.0L1316.4 936.2L1316.9 938.1L1317.5 938.0L1318.0 943.5L1318.5 941.1L1319.0 938.9L1319.6 941.5L1320.1 938.1L1320.6 939.3L1321.1 938.6L1321.7 941.4L1322.2 934.7L1322.7 937.9L1323.2 941.4L1323.8 940.7L1324.3 934.7L1324.8 941.8L1325.3 938.9L1325.9 938.7L1326.4 941.0L1326.9 943.8L1327.4 940.6L1328.0 940.2L1328.5 938.4L1329.0 939.3L1329.5 941.1L1330.1 939.1L1330.6 939.9L1331.1 940.7L1331.6 941.1L1332.2 941.8L1332.7 939.6L1333.2 943.8L1333.7 942.8L1334.3 941.3L1334.8 945.0L1335.3 942.4L1335.8 946.4L1336.4 943.1L1336.9 940.0L1337.4 940.0L1337.9 941.6L1338.5 942.1L1339.0 945.2L1339.5 936.7L1340.0 940.2L1340.6 938.6L1341.1 944.0L1341.6 942.1L1342.1 946.6L1342.7 939.6L1343.2 939.2L1343.7 947.1L1344.2 942.0L1344.8 940.1L1345.3 946.9L1345.8 947.1L1346.3 945.0L1346.9 943.8L1347.4 946.1L1347.9 942.0L1348.4 941.4L1349.0 940.3L1349.5 940.2L1350.0 937.9L1350.5 938.9L1351.1 946.1L1351.6 943.8L1352.1 945.5L1352.6 945.6L1353.2 942.7L1353.7 942.5L1354.2 941.1L1354.7 947.2L1355.3 946.2L1355.8 942.7L1356.3 943.3L1356.8 943.7L1357.4 943.0L1357.9 945.0L1358.4 940.9L1358.9 941.9L1359.5 943.2L1360.0 944.9L1360.5 943.5L1361.0 949.3L1361.6 945.9L1362.1 943.0L1362.6 947.4L1363.1 942.7L1363.7 942.9L1364.2 947.1L1364.7 944.0L1365.2 944.2L1365.8 942.2L1366.3 941.8L1366.8 943.6L1367.3 945.8L1367.9 944.0L1368.4 943.8L1368.9 941.7L1369.4 942.9L1370.0 945.6L1370.5 947.3L1371.0 944.7L1371.5 945.7L1372.1 946.7L1372.6 944.1L1373.1 945.1L1373.6 943.5L1374.2 942.4L1374.7 944.9L1375.2 937.6L1375.7 944.7L1376.3 940.8L1376.8 943.5L1377.3 940.8L1377.8 950.1L1378.4 945.9L1378.9 943.2L1379.4 942.2L1379.9 937.6L1380.4 942.9L1381.0 940.3L1381.5 941.7L1382.0 941.2L1382.5 942.4L1383.1 944.3L1383.6 942.4L1384.1 947.1L1384.6 940.4L1385.2 947.0L1385.7 943.2L1386.2 937.7L1386.7 944.6L1387.3 943.9L1387.8 940.3L1388.3 943.9L1388.8 946.5L1389.4 943.1L1389.9 942.1L1390.4 941.7L1390.9 946.5L1391.5 938.2L1392.0 938.5L1392.5 943.9L1393.0 943.1L1393.6 945.5L1394.1 939.2L1394.6 946.4L1395.1 941.7L1395.7 945.7L1396.2 946.4L1396.7 941.6L1397.2 939.4L1397.8 944.1L1398.3 946.4L1398.8 941.2L1399.3 944.3L1399.9 943.0L1400.4 938.7L1400.9 940.1L1401.4 945.9L1402.0 937.7L1402.5 944.0L1403.0 941.2L1403.5 946.2L1404.1 944.0L1404.6 950.0L1405.1 937.6L1405.6 939.1L1406.2 948.0L1406.7 948.9L1407.2 949.3L1407.7 939.7L1408.3 945.2L1408.8 943.9L1409.3 944.7L1409.8 944.0L1410.4 947.1L1410.9 943.5L1411.4 948.1L1411.9 943.7L1412.5 942.5L1413.0 942.0L1413.5 944.1L1414.0 946.2L1414.6 942.9L1415.1 944.8L1415.6 938.7L1416.1 941.1L1416.7 943.6L1417.2 944.6L1417.7 945.2L1418.2 945.8L1418.8 944.1L1419.3 942.3L1419.8 941.7L1420.3 941.6L1420.9 937.6L1421.4 944.9L1421.9 943.0L1422.4 936.7L1423.0 947.6L1423.5 944.2L1424.0 942.5L1424.5 942.5L1425.1 941.9L1425.6 943.4L1426.1 941.9L1426.6 942.7L1427.2 941.0L1427.7 947.1L1428.2 944.7L1428.7 942.7L1429.3 945.0L1429.8 945.0L1430.3 941.2L1430.8 944.1L1431.4 941.2L1431.9 941.0L1432.4 942.0L1432.9 941.5L1433.5 942.9L1434.0 945.8L1434.5 942.7L1435.0 941.7L1435.6 943.9L1436.1 942.9L1436.6 941.0L1437.1 944.7L1437.7 941.2L1438.2 938.4L1438.7 944.0L1439.2 942.4L1439.8 943.1L1440.3 939.1L1440.8 942.0L1441.3 940.6L1441.9 944.4L1442.4 942.8L1442.9 942.8L1443.4 947.2L1444.0 939.1L1444.5 940.5L1445.0 947.3L1445.5 940.8L1446.1 943.1L1446.6 941.6L1447.1 941.8L1447.6 946.9L1448.1 943.4L1448.7 938.7L1449.2 944.4L1449.7 945.7L1450.2 946.7L1450.8 946.3L1451.3 941.9L1451.8 938.0L1452.3 941.6L1452.9 942.1L1453.4 936.6L1453.9 944.4L1454.4 944.9L1455.0 941.3L1455.5 941.2L1456.0 945.9L1456.5 946.4L1457.1 942.0L1457.6 942.2L1458.1 946.9L1458.6 943.5L1459.2 944.6L1459.7 941.5L1460.2 943.3L1460.7 943.2L1461.3 944.0L1461.8 939.7L1462.3 938.7L1462.8 944.1L1463.4 940.4L1463.9 945.3L1464.4 942.8L1464.9 940.7L1465.5 938.4L1466.0 944.2L1466.5 943.2L1467.0 942.4L1467.6 947.5L1468.1 943.0L1468.6 945.0L1469.1 941.9L1469.7 946.4L1470.2 948.9L1470.7 942.9L1471.2 942.3L1471.8 944.7L1472.3 940.5L1472.8 943.9L1473.3 944.8L1473.9 941.7L1474.4 947.6L1474.9 945.0L1475.4 943.2L1476.0 940.7L1476.5 943.6L1477.0 942.2L1477.5 945.0L1478.1 942.3L1478.6 938.4L1479.1 945.1L1479.6 936.9L1480.2 945.0L1480.7 943.1L1481.2 942.7L1481.7 940.3L1482.3 946.7L1482.8 949.1L1483.3 941.5L1483.8 940.9L1484.4 941.4L1484.9 936.9L1485.4 942.6L1485.9 942.5L1486.5 940.5L1487.0 942.2L1487.5 938.4L1488.0 946.8L1488.6 944.3L1489.1 949.5L1489.6 940.8L1490.1 944.4L1490.7 940.5L1491.2 937.0L1491.7 943.3L1492.2 944.1L1492.8 944.8L1493.3 945.9L1493.8 945.2L1494.3 941.3L1494.9 943.2L1495.4 943.1L1495.9 943.9L1496.4 940.4L1497.0 941.7L1497.5 943.8L1498.0 942.7L1498.5 940.3L1499.1 939.3L1499.6 940.0L1500.1 941.7L1500.6 943.7L1501.2 945.5L1501.7 946.7L1502.2 947.2L1502.7 947.1L1503.3 946.4L1503.8 945.2L1504.3 943.5L1504.8 941.6L1505.4 939.9L1505.9 939.1L1506.4 939.7L1506.9 941.7L1507.5 944.4L1508.0 946.5L1508.5 947.0L1509.0 945.6L1509.6 943.1L1510.1 940.7L1510.6 939.3L1511.1 938.9L1511.7 939.6L1512.2 940.8L1512.7 942.4L1513.2 943.9L1513.8 945.3L1514.3 946.3L1514.8 946.8L1515.3 946.4L1515.9 945.0L1516.4 942.8L1516.9 940.4L1517.4 938.9L1517.9 938.9L1518.5 940.8L1519.0 943.5L1519.5 945.9L1520.0 946.8L1520.6 946.2L1521.1 942.7L1521.6 943.3L1522.1 943.3L1522.7 943.1L1523.2 943.2L1523.7 943.6L1524.2 944.0L1524.8 943.8L1525.3 944.0L1525.8 943.7L1526.3 944.3L1526.9 944.3L1527.4 944.0L1527.9 944.7L1528.4 944.6L1529.0 944.4L1529.5 944.5L1530.0 945.1L1530.5 945.2L1531.1 945.3L1531.6 944.8L1532.1 945.3L1532.6 945.0L1533.2 945.0L1533.7 945.4L1534.2 945.5L1534.7 945.1L1535.3 945.4L1535.8 945.7L1536.3 945.5L1536.8 945.8L1537.4 945.9L1537.9 946.2L1538.4 945.7L1538.9 945.7L1539.5 946.0L1540.0 945.8L1540.5 946.5L1541.0 946.4L1541.6 946.3L1542.1 946.1L1542.6 946.1L1543.1 946.6L1543.7 946.8L1544.2 946.7L1544.7 946.7L1545.2 946.5L1545.8 947.1L1546.3 946.7L1546.8 946.8L1547.3 946.8L1547.9 946.9L1548.4 947.1L1548.9 947.4L1549.4 947.4L1550.0 947.5L1550.5 947.3L1551.0 947.8L1551.5 947.7L1552.1 947.4L1552.6 947.8L1553.1 948.0L1553.6 948.0L1554.2 947.7L1554.7 947.9L1555.2 947.5L1555.7 947.6L1556.3 947.6L1556.8 948.1L1557.3 948.3L1557.8 948.3L1558.4 948.1L1558.9 948.0L1559.4 948.2L1559.9 948.4L1560.5 948.3L1561.0 948.3L1561.5 948.3L1562.0 948.3L1562.6 948.2L1563.1 948.4L1563.6 948.8L1564.1 948.4L1564.7 948.8L1565.2 948.6L1565.7 948.8L1566.2 948.6L1566.8 949.0L1567.3 949.0L1567.8 949.1L1568.3 949.2L1568.9 948.7L1569.4 949.0L1569.9 949.2L1570.4 949.2L1571.0 948.9L1571.5 949.2L1572.0 949.4L1572.5 949.1L1573.1 949.3L1573.6 949.1L1574.1 949.7L1574.6 949.5L1575.2 949.3L1575.7 949.4L1576.2 949.3L1576.7 949.9L1577.3 949.8L1577.8 949.9L1578.3 949.9L1578.8 949.4L1579.4 949.7L1579.9 949.5L1580.4 949.9L1580.9 949.6L1581.5 949.9L1582.0 950.0L1582.5 949.7L1583.0 949.6L1583.6 950.2L1584.1 949.9L1584.6 949.9L1585.1 950.2L1585.6 950.1L1586.2 950.3L1586.7 950.3L1587.2 950.3L1587.7 950.1L1588.3 950.1L1588.8 950.4L1589.3 950.5L1589.8 950.4L1590.4 950.1L1590.9 950.5L1591.4 950.4L1591.9 950.5L1592.5 950.2L1593.0 950.4L1593.5 950.7L1594.0 950.7L1594.6 950.5L1595.1 950.5L1595.6 950.4L1596.1 950.8L1596.7 950.8L1597.2 950.5L1597.7 950.7L1598.2 950.8L1598.8 950.8L1599.3 950.4L1599.8 950.8L1600.3 950.7L1600.9 950.8L1601.4 950.8L1601.9 950.5L1602.4 950.5L1603.0 950.9L1603.5 951.0L1604.0 950.7L1604.5 951.1L1605.1 951.2L1605.6 950.7L1606.1 951.0L1606.6 950.7L1607.2 951.0L1607.7 950.7L1608.2 951.0L1608.7 951.3L1609.3 951.4L1609.8 951.0L1610.3 951.0L1610.8 950.8L1611.4 951.4L1611.9 951.1L1612.4 951.3L1612.9 951.2L1613.5 951.4L1614.0 951.4L1614.5 951.2L1615.0 951.0L1615.6 951.5L1616.1 951.3L1616.6 951.1L1617.1 951.0L1617.7 951.6L1618.2 951.6L1618.7 951.1L1619.2 951.1L1619.8 951.4L1620.3 951.8L1620.8 951.2L1621.3 951.6L1621.9 951.2L1622.4 951.5L1622.9 951.3L1623.4 951.8L1624.0 951.4L1624.5 951.8L1625.0 951.7L1625.5 951.4L1626.1 951.5L1626.6 951.9L1627.1 951.9L1627.6 951.8L1628.2 951.7L1628.7 951.8L1629.2 952.0L1629.7 952.0L1630.3 951.7L1630.8 951.6L1631.3 952.2L1631.8 951.8L1632.4 951.7L1632.9 952.2L1633.4 951.7L1633.9 952.2L1634.5 951.9L1635.0 952.0L1635.5 951.9L1636.0 952.2L1636.6 952.1L1637.1 952.0L1637.6 952.1L1638.1 952.0L1638.7 952.2L1639.2 952.2L1639.7 952.5L1640.2 952.1L1640.8 952.2L1641.3 952.4L1641.8 952.1L1642.3 952.1L1642.9 952.3L1643.4 952.5L1643.9 952.3L1644.4 952.6L1645.0 952.6L1645.5 952.4L1646.0 952.7L1646.5 952.5L1647.1 952.4L1647.6 952.8L1648.1 952.4L1648.6 952.8L1649.2 952.4L1649.7 952.4L1650.2 952.5L1650.7 952.9L1651.3 952.6L1651.8 952.7L1652.3 952.3L1652.8 952.9L1653.4 952.4L1653.9 952.3L1654.4 952.5L1654.9 952.5L1655.4 952.9L1656.0 952.4L1656.5 952.7L1657.0 952.4L1657.5 952.5L1658.1 953.0L1658.6 952.6L1659.1 952.5L1659.6 953.1L1660.2 952.9L1660.7 952.6L1661.2 953.1L1661.7 952.6L1662.3 953.0L1662.8 952.7L1663.3 953.1L1663.8 952.9L1664.4 952.6L1664.9 953.1L1665.4 953.1L1665.9 952.9L1666.5 953.0L1667.0 953.2L1667.5 953.1L1668.0 953.1L1668.6 952.5L1669.1 952.7L1669.6 952.5L1670.1 953.0L1670.7 952.6L1671.2 953.0L1671.7 952.7L1672.2 952.6L1672.8 952.8L1673.3 952.5L1673.8 952.6L1674.3 952.6L1674.9 952.4L1675.4 952.9L1675.9 952.3L1676.4 952.5L1677.0 952.7L1677.5 952.4L1678.0 952.7L1678.5 952.2L1679.1 952.5L1679.6 952.6L1680.1 952.3L1680.6 952.5L1681.2 952.7L1681.7 952.3L1682.2 952.8L1682.7 952.2L1683.3 952.6L1683.8 952.3L1684.3 952.1L1684.8 952.3L1685.4 952.3L1685.9 952.5L1686.4 952.7L1686.9 952.6L1687.5 952.6L1688.0 952.2L1688.5 952.3L1689.0 952.3L1689.6 952.0L1690.1 952.5L1690.6 952.4L1691.1 952.1L1691.7 952.5L1692.2 952.5L1692.7 952.3L1693.2 952.4L1693.8 952.3L1694.3 952.3L1694.8 952.1L1695.3 952.1L1695.9 952.3L1696.4 952.0L1696.9 952.1L1697.4 952.3L1698.0 951.8L1698.5 952.2L1699.0 952.3L1699.5 952.3L1700.1 951.9L1700.6 951.7L1701.1 951.8L1701.6 952.0L1702.2 952.1L1702.7 952.2L1703.2 951.8L1703.7 951.8L1704.3 952.0L1704.8 951.7L1705.3 951.9L1705.8 951.5L1706.4 951.6L1706.9 951.9L1707.4 951.5L1707.9 952.0L1708.5 951.7L1709.0 951.8L1709.5 951.9L1710.0 952.0L1710.6 951.5L1711.1 952.0L1711.6 951.6L1712.1 951.3L1712.7 951.8L1713.2 951.8L1713.7 951.5L1714.2 951.5L1714.8 951.4L1715.3 951.3L1715.8 951.7L1716.3 951.6L1716.9 951.6L1717.4 951.7L1717.9 951.1L1718.4 951.2L1719.0 951.2L1719.5 951.7L1720.0 951.1L1720.5 951.2L1721.1 951.3L1721.6 951.1L1722.1 951.3L1722.6 951.4L1723.1 951.5L1723.7 951.4L1724.2 951.5L1724.7 951.3L1725.2 951.0L1725.8 951.0L1726.3 950.9L1726.8 951.0L1727.3 951.2L1727.9 951.0L1728.4 951.1L1728.9 950.8L1729.4 951.0L1730.0 951.2L1730.5 950.9L1731.0 950.7L1731.5 951.1L1732.1 950.7L1732.6 951.2L1733.1 951.1L1733.6 951.1L1734.2 950.7L1734.7 950.6L1735.2 950.7L1735.7 950.9L1736.3 950.5L1736.8 950.9L1737.3 950.9L1737.8 950.5L1738.4 950.6L1738.9 950.6L1739.4 950.6L1739.9 950.4L1740.5 950.7L1741.0 950.4L1741.5 950.5L1742.0 950.4L1742.6 950.6L1743.1 950.4L1743.6 950.5L1744.1 950.7L1744.7 950.7L1745.2 950.4L1745.7 950.8L1746.2 950.2L1746.8 950.7L1747.3 950.7L1747.8 950.7L1748.3 950.1L1748.9 950.5L1749.4 950.6L1749.9 950.7L1750.4 950.6L1751.0 950.2L1751.5 950.2L1752.0 950.2L1752.5 950.1L1753.1 950.5L1753.6 950.2L1754.1 950.3L1754.6 950.0L1755.2 950.0L1755.7 949.9L1756.2 950.4L1756.7 949.9L1757.3 949.9L1757.8 949.8L1758.3 950.4L1758.8 950.3L1759.4 950.3L1759.9 950.4L1760.4 949.8L1760.9 949.8L1761.5 949.9L1762.0 949.8L1762.5 949.9L1763.0 950.1L1763.6 950.2L1764.1 950.2L1764.6 949.7L1765.1 950.1L1765.7 950.0L1766.2 949.9L1766.7 950.2L1767.2 950.0L1767.8 950.0L1768.3 949.7L1768.8 949.9L1769.3 949.9L1769.9 949.5L1770.4 949.7L1770.9 949.5L1771.4 949.6L1772.0 950.0L1772.5 949.7L1773.0 949.7L1773.5 949.5L1774.1 949.7L1774.6 949.5L1775.1 949.6L1775.6 949.8L1776.2 949.3L1776.7 949.8L1777.2 949.3L1777.7 949.7L1778.3 949.8L1778.8 949.7L1779.3 949.3L1779.8 949.1L1780.4 949.8L1780.9 949.4L1781.4 949.4L1781.9 949.2L1782.5 949.6L1783.0 949.4L1783.5 949.5L1784.0 949.1L1784.6 949.5L1785.1 949.0L1785.6 949.4L1786.1 949.5L1786.7 949.1L1787.2 949.3L1787.7 949.5L1788.2 949.1L1788.8 949.5L1789.3 949.0L1789.8 949.0L1790.3 949.0L1790.9 949.1L1791.4 949.2L1791.9 949.2L1792.4 949.2L1792.9 948.8L1793.5 949.3L1794.0 948.8L1794.5 949.3L1795.0 949.2L1795.6 949.2L1796.1 948.7L1796.6 949.0L1797.1 949.0L1797.7 948.7L1798.2 949.1L1798.7 948.9L1799.2 948.9L1799.8 948.7L1800.3 948.7L1800.8 948.7L1801.3 948.9L1801.9 948.9L1802.4 949.0L1802.9 948.6L1803.4 948.7L1804.0 948.6L1804.5 949.0L1805.0 948.8L1805.5 948.5L1806.1 948.6L1806.6 948.9L1807.1 948.7L1807.6 948.4L1808.2 948.8L1808.7 948.8L1809.2 948.7L1809.7 948.4L1810.3 948.3L1810.8 948.8L1811.3 948.8L1811.8 948.7L1812.4 948.6L1812.9 948.5L1813.4 948.7L1813.9 948.6L1814.5 948.6L1815.0 948.1L1815.5 948.2L1816.0 948.6L1816.6 948.1L1817.1 948.6L1817.6 948.4L1818.1 948.0L1818.7 948.1L1819.2 948.1L1819.7 948.3L1820.2 948.5L1820.8 948.1L1821.3 948.5L1821.8 948.4L1822.3 948.3L1822.9 948.5L1823.4 948.2L1823.9 947.9L1824.4 948.1L1825.0 948.4L1825.5 948.5L1826.0 948.7L1826.5 949.1L1827.1 948.9L1827.6 949.2L1828.1 949.1L1828.6 949.1L1829.2 949.6L1829.7 949.7L1830.2 949.7L1830.7 950.0L1831.3 950.3L1831.8 950.1L1832.3 950.1L1832.8 950.3L1833.4 950.4L1833.9 950.4L1834.4 950.6L1834.9 950.7L1835.5 950.9L1836.0 951.1L1836.5 950.9L1837.0 951.3L1837.6 951.2L1838.1 951.1L1838.6 951.2L1839.1 951.3L1839.7 951.6L1840.2 951.6L1840.7 951.7L1841.2 951.6L1841.8 951.8L1842.3 951.7L1842.8 951.5L1843.3 952.0L1843.9 951.6L1844.4 951.5L1844.9 951.8L1845.4 951.7L1846.0 951.3L1846.5 951.9L1847.0 951.6L1847.5 951.8L1848.1 951.3L1848.6 951.2L1849.1 951.5L1849.6 951.7L1850.2 951.4L1850.7 951.3L1851.2 951.2L1851.7 951.3L1852.3 951.1L1852.8 950.9L1853.3 951.1L1853.8 951.1L1854.4 950.7L1854.9 951.1L1855.4 950.7L1855.9 950.9L1856.5 950.6L1857.0 950.9L1857.5 950.3L1858.0 950.7L1858.6 950.8L1859.1 950.6L1859.6 950.5" fill="none" stroke="#fb4b4b" stroke-width="1.6" stroke-linejoin="round"/><path d="M1104.4 1018.5L1104.9 1018.4L1105.4 1018.4L1106.0 1018.3L1106.5 1018.5L1107.0 1018.5L1107.5 1018.5L1108.1 1018.4L1108.6 1018.3L1109.1 1018.4L1109.6 1018.5L1110.2 1018.4L1110.7 1018.5L1111.2 1018.6L1111.7 1018.6L1112.3 1018.4L1112.8 1018.4L1113.3 1018.5L1113.8 1018.5L1114.4 1018.5L1114.9 1018.6L1115.4 1018.4L1115.9 1018.6L1116.5 1018.5L1117.0 1018.5L1117.5 1018.5L1118.0 1018.6L1118.6 1018.6L1119.1 1018.6L1119.6 1018.7L1120.1 1018.5L1120.7 1018.7L1121.2 1018.5L1121.7 1018.7L1122.2 1018.7L1122.8 1018.7L1123.3 1018.7L1123.8 1018.7L1124.3 1018.8L1124.9 1018.6L1125.4 1018.7L1125.9 1018.8L1126.4 1018.8L1127.0 1018.7L1127.5 1018.7L1128.0 1018.7L1128.5 1018.7L1129.1 1018.8L1129.6 1018.6L1130.1 1018.6L1130.6 1018.9L1131.2 1018.7L1131.7 1018.7L1132.2 1018.7L1132.7 1018.9L1133.3 1018.7L1133.8 1018.8L1134.3 1019.0L1134.8 1019.0L1135.4 1018.8L1135.9 1018.9L1136.4 1019.0L1136.9 1019.1L1137.5 1019.1L1138.0 1019.1L1138.5 1018.9L1139.0 1019.1L1139.6 1019.1L1140.1 1018.9L1140.6 1019.0L1141.1 1019.2L1141.7 1019.0L1142.2 1019.1L1142.7 1019.1L1143.2 1019.1L1143.8 1019.1L1144.3 1019.1L1144.8 1019.1L1145.3 1019.3L1145.9 1019.2L1146.4 1019.3L1146.9 1019.2L1147.4 1019.3L1148.0 1019.2L1148.5 1019.3L1149.0 1019.4L1149.5 1019.4L1150.1 1019.5L1150.6 1019.4L1151.1 1019.5L1151.6 1019.4L1152.2 1019.5L1152.7 1019.5L1153.2 1019.5L1153.7 1019.5L1154.3 1019.4L1154.8 1019.7L1155.3 1019.4L1155.8 1019.6L1156.4 1019.6L1156.9 1019.5L1157.4 1019.5L1157.9 1019.7L1158.5 1019.7L1159.0 1019.5L1159.5 1019.8L1160.0 1019.7L1160.6 1019.7L1161.1 1019.9L1161.6 1019.7L1162.1 1019.7L1162.7 1019.6L1163.2 1019.8L1163.7 1019.7L1164.2 1019.8L1164.8 1019.8L1165.3 1019.6L1165.8 1019.6L1166.3 1019.1L1166.9 1018.2L1167.4 1017.0L1167.9 1015.6L1168.4 1015.0L1169.0 1014.3L1169.5 1013.6L1170.0 1012.9L1170.5 1012.4L1171.1 1011.7L1171.6 1011.4L1172.1 1010.9L1172.6 1010.5L1173.1 1010.2L1173.7 1009.7L1174.2 1009.4L1174.7 1009.0L1175.2 1008.8L1175.8 1008.5L1176.3 1008.1L1176.8 1008.0L1177.3 1007.7L1177.9 1007.6L1178.4 1007.4L1178.9 1007.2L1179.4 1006.9L1180.0 1006.6L1180.5 1006.4L1181.0 1006.4L1181.5 1006.1L1182.1 1005.9L1182.6 1005.9L1183.1 1005.9L1183.6 1005.8L1184.2 1005.7L1184.7 1005.6L1185.2 1005.3L1185.7 1005.2L1186.3 1005.1L1186.8 1005.0L1187.3 1004.8L1187.8 1004.8L1188.4 1004.7L1188.9 1004.6L1189.4 1004.5L1189.9 1004.4L1190.5 1004.3L1191.0 1004.3L1191.5 1004.1L1192.0 1004.1L1192.6 1003.9L1193.1 1004.1L1193.6 1004.0L1194.1 1003.9L1194.7 1003.6L1195.2 1003.5L1195.7 1003.5L1196.2 1003.5L1196.8 1003.3L1197.3 1003.2L1197.8 1003.2L1198.3 1003.2L1198.9 1003.2L1199.4 1003.0L1199.9 1003.0L1200.4 1002.9L1201.0 1002.8L1201.5 1002.6L1202.0 1002.8L1202.5 1002.6L1203.1 1002.7L1203.6 1002.6L1204.1 1002.4L1204.6 1002.4L1205.2 1002.2L1205.7 1002.3L1206.2 1002.4L1206.7 1002.2L1207.3 1002.1L1207.8 1001.9L1208.3 1001.9L1208.8 1002.0L1209.4 1001.9L1209.9 1002.0L1210.4 1004.1L1210.9 1006.5L1211.5 1006.8L1212.0 1005.5L1212.5 1004.2L1213.0 1003.5L1213.6 1003.2L1214.1 1002.5L1214.6 1002.3L1215.1 1001.7L1215.7 1001.8L1216.2 1001.7L1216.7 1001.4L1217.2 1001.4L1217.8 1001.2L1218.3 1001.2L1218.8 1001.1L1219.3 1000.8L1219.9 1000.7L1220.4 1000.6L1220.9 1000.5L1221.4 1000.6L1222.0 1000.4L1222.5 1000.3L1223.0 1000.3L1223.5 1000.1L1224.1 1004.3L1224.6 1007.2L1225.1 1007.4L1225.6 1007.5L1226.2 1005.1L1226.7 1007.1L1227.2 1007.0L1227.7 1007.8L1228.3 1008.2L1228.8 1004.9L1229.3 1005.7L1229.8 1004.5L1230.4 1007.8L1230.9 1007.2L1231.4 1008.6L1231.9 1005.6L1232.5 1009.4L1233.0 1006.3L1233.5 1005.4L1234.0 1004.9L1234.6 1008.7L1235.1 1005.3L1235.6 1008.3L1236.1 1008.4L1236.7 1009.3L1237.2 1005.2L1237.7 1004.3L1238.2 1008.1L1238.8 1008.3L1239.3 1007.6L1239.8 1003.0L1240.3 1005.3L1240.9 1007.9L1241.4 1010.0L1241.9 1008.1L1242.4 1005.0L1242.9 1003.8L1243.5 1007.4L1244.0 1008.1L1244.5 1007.8L1245.0 1010.1L1245.6 1005.4L1246.1 1008.7L1246.6 1005.1L1247.1 1009.7L1247.7 1009.0L1248.2 1006.4L1248.7 1008.1L1249.2 1005.5L1249.8 1006.8L1250.3 1008.7L1250.8 1005.8L1251.3 1005.4L1251.9 1009.9L1252.4 1003.8L1252.9 1006.0L1253.4 1005.5L1254.0 1009.7L1254.5 1007.9L1255.0 1007.3L1255.5 1005.0L1256.1 1009.0L1256.6 1008.0L1257.1 1009.8L1257.6 1007.0L1258.2 1006.1L1258.7 1009.2L1259.2 1007.5L1259.7 1005.9L1260.3 1004.2L1260.8 1005.6L1261.3 1007.0L1261.8 1008.3L1262.4 1008.0L1262.9 1007.5L1263.4 1006.4L1263.9 1006.6L1264.5 1004.1L1265.0 1006.1L1265.5 1008.1L1266.0 1004.3L1266.6 1005.1L1267.1 1006.4L1267.6 1007.6L1268.1 1009.2L1268.7 1008.0L1269.2 1005.2L1269.7 1007.7L1270.2 1008.4L1270.8 1006.2L1271.3 1006.1L1271.8 1005.5L1272.3 1005.5L1272.9 1004.3L1273.4 1007.7L1273.9 1004.9L1274.4 1008.0L1275.0 1005.3L1275.5 1006.1L1276.0 1006.0L1276.5 1004.8L1277.1 1006.4L1277.6 1004.5L1278.1 1004.9L1278.6 1006.2L1279.2 1007.3L1279.7 1007.7L1280.2 1007.3L1280.7 1006.7L1281.3 1006.4L1281.8 1002.3L1282.3 1005.2L1282.8 1004.9L1283.4 1007.9L1283.9 1007.6L1284.4 1006.9L1284.9 1005.9L1285.5 1008.3L1286.0 1003.2L1286.5 1007.4L1287.0 1004.2L1287.6 1010.3L1288.1 1006.3L1288.6 1005.7L1289.1 1005.9L1289.7 1005.0L1290.2 1005.7L1290.7 1005.9L1291.2 1010.2L1291.8 1007.8L1292.3 1010.4L1292.8 1005.0L1293.3 1005.7L1293.9 1006.8L1294.4 1008.1L1294.9 1007.6L1295.4 1002.5L1296.0 1002.8L1296.5 1006.6L1297.0 1003.8L1297.5 1009.9L1298.1 1010.6L1298.6 1007.6L1299.1 1008.4L1299.6 1007.8L1300.2 1006.2L1300.7 1002.6L1301.2 1008.0L1301.7 1006.6L1302.3 1006.1L1302.8 1006.8L1303.3 1004.8L1303.8 1003.2L1304.4 1009.2L1304.9 1006.5L1305.4 1007.3L1305.9 1006.1L1306.5 1009.8L1307.0 1010.2L1307.5 1010.9L1308.0 1005.9L1308.6 1006.6L1309.1 1006.8L1309.6 1011.0L1310.1 1007.7L1310.6 1008.3L1311.2 1009.5L1311.7 1008.6L1312.2 1005.9L1312.7 1006.1L1313.3 1007.1L1313.8 1006.3L1314.3 1008.1L1314.8 1007.0L1315.4 1007.1L1315.9 1006.3L1316.4 1007.3L1316.9 1007.5L1317.5 1007.5L1318.0 1008.3L1318.5 1003.9L1319.0 1006.5L1319.6 1006.7L1320.1 1004.0L1320.6 1005.3L1321.1 1009.7L1321.7 1006.4L1322.2 1006.2L1322.7 1004.7L1323.2 1005.6L1323.8 1006.4L1324.3 1009.2L1324.8 1008.7L1325.3 1007.2L1325.9 1006.9L1326.4 1009.0L1326.9 1008.1L1327.4 1008.2L1328.0 1007.6L1328.5 1007.2L1329.0 1008.1L1329.5 1009.4L1330.1 1006.0L1330.6 1005.5L1331.1 1007.9L1331.6 1006.3L1332.2 1007.2L1332.7 1006.9L1333.2 1007.1L1333.7 1009.0L1334.3 1007.0L1334.8 1006.4L1335.3 1009.2L1335.8 1005.0L1336.4 1004.8L1336.9 1005.2L1337.4 1005.0L1337.9 1006.9L1338.5 1008.5L1339.0 1009.0L1339.5 1009.3L1340.0 1007.9L1340.6 1008.2L1341.1 1007.1L1341.6 1011.4L1342.1 1004.5L1342.7 1004.6L1343.2 1008.4L1343.7 1007.2L1344.2 1007.6L1344.8 1008.0L1345.3 1008.8L1345.8 1008.7L1346.3 1009.9L1346.9 1008.3L1347.4 1008.7L1347.9 1008.1L1348.4 1010.2L1349.0 1008.7L1349.5 1008.7L1350.0 1007.8L1350.5 1010.7L1351.1 1008.2L1351.6 1007.2L1352.1 1007.9L1352.6 1009.6L1353.2 1009.9L1353.7 1009.5L1354.2 1007.9L1354.7 1006.5L1355.3 1009.5L1355.8 1010.3L1356.3 1008.6L1356.8 1009.0L1357.4 1010.9L1357.9 1010.6L1358.4 1009.6L1358.9 1008.3L1359.5 1011.5L1360.0 1011.2L1360.5 1008.8L1361.0 1011.7L1361.6 1009.5L1362.1 1009.1L1362.6 1009.9L1363.1 1011.4L1363.7 1009.9L1364.2 1010.4L1364.7 1009.4L1365.2 1011.3L1365.8 1008.2L1366.3 1012.7L1366.8 1010.3L1367.3 1010.1L1367.9 1008.6L1368.4 1011.1L1368.9 1009.3L1369.4 1011.1L1370.0 1009.1L1370.5 1007.6L1371.0 1010.9L1371.5 1009.6L1372.1 1011.7L1372.6 1008.8L1373.1 1008.4L1373.6 1010.2L1374.2 1012.1L1374.7 1009.7L1375.2 1008.5L1375.7 1008.6L1376.3 1009.0L1376.8 1013.2L1377.3 1011.4L1377.8 1008.0L1378.4 1012.3L1378.9 1008.5L1379.4 1007.2L1379.9 1009.0L1380.4 1008.4L1381.0 1010.8L1381.5 1012.3L1382.0 1010.5L1382.5 1010.6L1383.1 1010.4L1383.6 1009.1L1384.1 1010.5L1384.6 1010.0L1385.2 1009.5L1385.7 1010.3L1386.2 1007.0L1386.7 1009.5L1387.3 1010.1L1387.8 1010.7L1388.3 1011.4L1388.8 1007.8L1389.4 1010.0L1389.9 1012.3L1390.4 1011.4L1390.9 1010.5L1391.5 1011.1L1392.0 1008.2L1392.5 1012.6L1393.0 1009.3L1393.6 1010.0L1394.1 1012.6L1394.6 1010.2L1395.1 1010.5L1395.7 1009.3L1396.2 1011.2L1396.7 1009.7L1397.2 1013.7L1397.8 1012.5L1398.3 1008.7L1398.8 1008.1L1399.3 1010.3L1399.9 1011.5L1400.4 1008.0L1400.9 1014.3L1401.4 1011.9L1402.0 1008.8L1402.5 1008.8L1403.0 1012.3L1403.5 1014.0L1404.1 1007.1L1404.6 1009.7L1405.1 1011.9L1405.6 1009.9L1406.2 1008.2L1406.7 1014.0L1407.2 1007.7L1407.7 1008.4L1408.3 1013.9L1408.8 1008.3L1409.3 1013.3L1409.8 1007.6L1410.4 1009.0L1410.9 1005.7L1411.4 1010.9L1411.9 1009.7L1412.5 1007.7L1413.0 1010.8L1413.5 1010.9L1414.0 1010.3L1414.6 1009.7L1415.1 1011.5L1415.6 1008.7L1416.1 1008.6L1416.7 1009.3L1417.2 1006.6L1417.7 1010.0L1418.2 1007.3L1418.8 1010.3L1419.3 1008.1L1419.8 1012.4L1420.3 1009.0L1420.9 1009.5L1421.4 1010.0L1421.9 1010.1L1422.4 1009.7L1423.0 1010.2L1423.5 1012.3L1424.0 1010.0L1424.5 1009.9L1425.1 1009.8L1425.6 1010.5L1426.1 1009.2L1426.6 1007.9L1427.2 1009.3L1427.7 1009.6L1428.2 1007.1L1428.7 1007.6L1429.3 1007.6L1429.8 1007.3L1430.3 1009.3L1430.8 1009.0L1431.4 1007.4L1431.9 1009.6L1432.4 1009.0L1432.9 1008.4L1433.5 1008.4L1434.0 1009.2L1434.5 1007.6L1435.0 1009.1L1435.6 1007.9L1436.1 1007.5L1436.6 1008.0L1437.1 1007.9L1437.7 1010.5L1438.2 1010.7L1438.7 1009.8L1439.2 1008.3L1439.8 1006.9L1440.3 1010.7L1440.8 1008.6L1441.3 1010.2L1441.9 1010.1L1442.4 1009.4L1442.9 1008.0L1443.4 1008.7L1444.0 1007.3L1444.5 1010.5L1445.0 1007.7L1445.5 1007.6L1446.1 1009.0L1446.6 1008.3L1447.1 1010.0L1447.6 1010.8L1448.1 1009.8L1448.7 1010.2L1449.2 1005.1L1449.7 1009.9L1450.2 1006.4L1450.8 1008.8L1451.3 1008.6L1451.8 1007.9L1452.3 1010.5L1452.9 1007.6L1453.4 1008.5L1453.9 1011.8L1454.4 1008.1L1455.0 1008.2L1455.5 1008.4L1456.0 1006.4L1456.5 1010.0L1457.1 1008.3L1457.6 1007.9L1458.1 1010.9L1458.6 1007.1L1459.2 1011.9L1459.7 1011.6L1460.2 1008.3L1460.7 1011.3L1461.3 1009.5L1461.8 1012.3L1462.3 1009.2L1462.8 1011.4L1463.4 1008.7L1463.9 1012.1L1464.4 1008.6L1464.9 1009.8L1465.5 1009.3L1466.0 1009.5L1466.5 1009.2L1467.0 1011.7L1467.6 1013.5L1468.1 1009.4L1468.6 1011.1L1469.1 1010.2L1469.7 1008.7L1470.2 1012.9L1470.7 1010.8L1471.2 1010.5L1471.8 1011.3L1472.3 1008.9L1472.8 1009.7L1473.3 1010.9L1473.9 1011.2L1474.4 1008.2L1474.9 1010.6L1475.4 1008.5L1476.0 1008.8L1476.5 1012.7L1477.0 1011.4L1477.5 1009.6L1478.1 1009.0L1478.6 1008.3L1479.1 1008.3L1479.6 1007.9L1480.2 1010.2L1480.7 1010.0L1481.2 1008.3L1481.7 1010.3L1482.3 1007.9L1482.8 1012.3L1483.3 1008.6L1483.8 1010.0L1484.4 1013.0L1484.9 1008.0L1485.4 1009.2L1485.9 1009.7L1486.5 1011.5L1487.0 1010.5L1487.5 1007.1L1488.0 1011.2L1488.6 1013.8L1489.1 1011.2L1489.6 1011.9L1490.1 1010.0L1490.7 1010.5L1491.2 1011.4L1491.7 1011.3L1492.2 1007.9L1492.8 1012.4L1493.3 1006.2L1493.8 1010.8L1494.3 1011.8L1494.9 1008.4L1495.4 1008.8L1495.9 1011.8L1496.4 1008.4L1497.0 1013.4L1497.5 1011.6L1498.0 1009.5L1498.5 1008.1L1499.1 1007.5L1499.6 1007.9L1500.1 1008.9L1500.6 1010.1L1501.2 1011.2L1501.7 1011.9L1502.2 1012.2L1502.7 1012.1L1503.3 1011.7L1503.8 1010.9L1504.3 1009.9L1504.8 1008.8L1505.4 1007.8L1505.9 1007.3L1506.4 1007.7L1506.9 1008.9L1507.5 1010.4L1508.0 1011.7L1508.5 1011.9L1509.0 1011.1L1509.6 1009.6L1510.1 1008.2L1510.6 1007.3L1511.1 1007.1L1511.7 1007.5L1512.2 1008.2L1512.7 1009.1L1513.2 1010.0L1513.8 1010.9L1514.3 1011.5L1514.8 1011.7L1515.3 1011.5L1515.9 1010.7L1516.4 1009.4L1516.9 1007.9L1517.4 1007.0L1517.9 1007.0L1518.5 1008.1L1519.0 1009.7L1519.5 1011.2L1520.0 1011.8L1520.6 1011.5L1521.1 1009.5L1521.6 1009.8L1522.1 1009.9L1522.7 1010.0L1523.2 1010.0L1523.7 1010.3L1524.2 1010.4L1524.8 1010.4L1525.3 1010.8L1525.8 1010.8L1526.3 1010.8L1526.9 1010.9L1527.4 1011.1L1527.9 1011.4L1528.4 1011.3L1529.0 1011.5L1529.5 1011.5L1530.0 1011.6L1530.5 1011.7L1531.1 1011.9L1531.6 1012.1L1532.1 1012.1L1532.6 1012.1L1533.2 1012.2L1533.7 1012.4L1534.2 1012.5L1534.7 1012.4L1535.3 1012.5L1535.8 1012.7L1536.3 1012.5L1536.8 1012.7L1537.4 1013.0L1537.9 1012.9L1538.4 1012.9L1538.9 1013.1L1539.5 1013.1L1540.0 1013.4L1540.5 1013.4L1541.0 1013.3L1541.6 1013.4L1542.1 1013.5L1542.6 1013.7L1543.1 1013.7L1543.7 1013.8L1544.2 1013.9L1544.7 1013.9L1545.2 1014.0L1545.8 1013.9L1546.3 1014.1L1546.8 1014.3L1547.3 1014.4L1547.9 1014.5L1548.4 1014.4L1548.9 1014.7L1549.4 1014.7L1550.0 1014.8L1550.5 1014.7L1551.0 1014.7L1551.5 1014.8L1552.1 1014.8L1552.6 1015.1L1553.1 1015.2L1553.6 1015.0L1554.2 1015.2L1554.7 1015.1L1555.2 1015.3L1555.7 1015.4L1556.3 1015.4L1556.8 1015.5L1557.3 1015.3L1557.8 1015.5L1558.4 1015.6L1558.9 1015.6L1559.4 1015.7L1559.9 1015.8L1560.5 1015.6L1561.0 1015.8L1561.5 1015.7L1562.0 1015.9L1562.6 1015.9L1563.1 1016.1L1563.6 1016.2L1564.1 1016.0L1564.7 1016.0L1565.2 1016.3L1565.7 1016.1L1566.2 1016.2L1566.8 1016.4L1567.3 1016.4L1567.8 1016.3L1568.3 1016.5L1568.9 1016.4L1569.4 1016.7L1569.9 1016.7L1570.4 1016.7L1571.0 1016.9L1571.5 1016.9L1572.0 1016.8L1572.5 1016.9L1573.1 1016.9L1573.6 1017.1L1574.1 1017.2L1574.6 1017.2L1575.2 1017.3L1575.7 1017.1L1576.2 1017.3L1576.7 1017.3L1577.3 1017.5L1577.8 1017.4L1578.3 1017.5L1578.8 1017.5L1579.4 1017.6L1579.9 1017.6L1580.4 1017.5L1580.9 1017.6L1581.5 1017.7L1582.0 1017.7L1582.5 1017.7L1583.0 1017.8L1583.6 1017.9L1584.1 1017.7L1584.6 1017.9L1585.1 1017.9L1585.6 1017.8L1586.2 1018.0L1586.7 1018.0L1587.2 1017.9L1587.7 1018.1L1588.3 1018.1L1588.8 1018.0L1589.3 1018.0L1589.8 1018.2L1590.4 1018.2L1590.9 1018.1L1591.4 1018.3L1591.9 1018.1L1592.5 1018.4L1593.0 1018.2L1593.5 1018.4L1594.0 1018.5L1594.6 1018.5L1595.1 1018.6L1595.6 1018.4L1596.1 1018.6L1596.7 1018.5L1597.2 1018.6L1597.7 1018.7L1598.2 1018.7L1598.8 1018.7L1599.3 1018.8L1599.8 1018.7L1600.3 1018.9L1600.9 1018.8L1601.4 1018.9L1601.9 1019.0L1602.4 1018.9L1603.0 1019.0L1603.5 1019.0L1604.0 1019.0L1604.5 1019.1L1605.1 1019.1L1605.6 1019.3L1606.1 1019.3L1606.6 1019.1L1607.2 1019.3L1607.7 1019.2L1608.2 1019.4L1608.7 1019.3L1609.3 1019.4L1609.8 1019.4L1610.3 1019.5L1610.8 1019.6L1611.4 1019.5L1611.9 1019.6L1612.4 1019.7L1612.9 1019.5L1613.5 1019.7L1614.0 1019.7L1614.5 1019.6L1615.0 1019.6L1615.6 1019.6L1616.1 1019.7L1616.6 1019.9L1617.1 1019.9L1617.7 1020.0L1618.2 1019.9L1618.7 1019.9L1619.2 1020.0L1619.8 1020.0L1620.3 1020.0L1620.8 1020.0L1621.3 1020.2L1621.9 1020.0L1622.4 1020.2L1622.9 1020.1L1623.4 1020.3L1624.0 1020.3L1624.5 1020.1L1625.0 1020.2L1625.5 1020.2L1626.1 1020.4L1626.6 1020.4L1627.1 1020.4L1627.6 1020.4L1628.2 1020.4L1628.7 1020.4L1629.2 1020.6L1629.7 1020.5L1630.3 1020.4L1630.8 1020.6L1631.3 1020.4L1631.8 1020.5L1632.4 1020.5L1632.9 1020.6L1633.4 1020.6L1633.9 1020.6L1634.5 1020.7L1635.0 1020.8L1635.5 1020.6L1636.0 1020.6L1636.6 1020.8L1637.1 1020.9L1637.6 1020.7L1638.1 1020.8L1638.7 1020.9L1639.2 1020.9L1639.7 1021.0L1640.2 1020.8L1640.8 1021.0L1641.3 1020.8L1641.8 1020.9L1642.3 1021.1L1642.9 1020.9L1643.4 1021.0L1643.9 1021.0L1644.4 1021.0L1645.0 1021.1L1645.5 1021.2L1646.0 1021.0L1646.5 1021.2L1647.1 1021.0L1647.6 1021.1L1648.1 1021.1L1648.6 1021.1L1649.2 1021.2L1649.7 1021.3L1650.2 1021.4L1650.7 1021.3L1651.3 1021.4L1651.8 1021.4L1652.3 1021.3L1652.8 1021.5L1653.4 1021.4L1653.9 1021.6L1654.4 1021.4L1654.9 1021.4L1655.4 1021.6L1656.0 1021.5L1656.5 1021.4L1657.0 1021.5L1657.5 1021.5L1658.1 1021.6L1658.6 1021.7L1659.1 1021.6L1659.6 1021.6L1660.2 1021.7L1660.7 1021.7L1661.2 1021.7L1661.7 1021.6L1662.3 1021.6L1662.8 1021.7L1663.3 1021.7L1663.8 1021.7L1664.4 1021.7L1664.9 1021.6L1665.4 1021.7L1665.9 1021.7L1666.5 1021.5L1667.0 1021.7L1667.5 1021.6L1668.0 1021.6L1668.6 1021.4L1669.1 1021.5L1669.6 1021.4L1670.1 1021.6L1670.7 1021.4L1671.2 1021.4L1671.7 1021.4L1672.2 1021.3L1672.8 1021.3L1673.3 1021.5L1673.8 1021.4L1674.3 1021.3L1674.9 1021.4L1675.4 1021.4L1675.9 1021.3L1676.4 1021.3L1677.0 1021.1L1677.5 1021.2L1678.0 1021.3L1678.5 1021.2L1679.1 1021.1L1679.6 1021.1L1680.1 1021.1L1680.6 1021.2L1681.2 1021.2L1681.7 1020.8L1682.2 1020.9L1682.7 1021.1L1683.3 1020.9L1683.8 1020.8L1684.3 1020.9L1684.8 1021.0L1685.4 1020.8L1685.9 1020.8L1686.4 1020.9L1686.9 1020.8L1687.5 1020.9L1688.0 1020.6L1688.5 1020.7L1689.0 1020.6L1689.6 1020.5L1690.1 1020.6L1690.6 1020.7L1691.1 1020.7L1691.7 1020.7L1692.2 1020.7L1692.7 1020.4L1693.2 1020.4L1693.8 1020.5L1694.3 1020.5L1694.8 1020.4L1695.3 1020.3L1695.9 1020.3L1696.4 1020.5L1696.9 1020.3L1697.4 1020.2L1698.0 1020.2L1698.5 1020.3L1699.0 1020.3L1699.5 1020.1L1700.1 1020.3L1700.6 1020.2L1701.1 1020.2L1701.6 1020.2L1702.2 1020.1L1702.7 1020.2L1703.2 1020.3L1703.7 1020.1L1704.3 1020.1L1704.8 1020.0L1705.3 1020.0L1705.8 1019.9L1706.4 1019.9L1706.9 1020.0L1707.4 1020.0L1707.9 1020.1L1708.5 1020.1L1709.0 1020.0L1709.5 1020.1L1710.0 1019.9L1710.6 1020.0L1711.1 1019.9L1711.6 1019.8L1712.1 1020.0L1712.7 1020.0L1713.2 1019.9L1713.7 1020.0L1714.2 1019.8L1714.8 1020.0L1715.3 1019.7L1715.8 1019.7L1716.3 1019.7L1716.9 1019.8L1717.4 1019.8L1717.9 1019.7L1718.4 1019.7L1719.0 1019.8L1719.5 1019.8L1720.0 1019.7L1720.5 1019.6L1721.1 1019.6L1721.6 1019.5L1722.1 1019.7L1722.6 1019.7L1723.1 1019.6L1723.7 1019.6L1724.2 1019.6L1724.7 1019.7L1725.2 1019.7L1725.8 1019.6L1726.3 1019.5L1726.8 1019.4L1727.3 1019.4L1727.9 1019.4L1728.4 1019.3L1728.9 1019.3L1729.4 1019.4L1730.0 1019.4L1730.5 1019.6L1731.0 1019.4L1731.5 1019.4L1732.1 1019.4L1732.6 1019.4L1733.1 1019.2L1733.6 1019.4L1734.2 1019.3L1734.7 1019.4L1735.2 1019.4L1735.7 1019.2L1736.3 1019.4L1736.8 1019.4L1737.3 1019.2L1737.8 1019.3L1738.4 1019.3L1738.9 1019.2L1739.4 1019.2L1739.9 1019.2L1740.5 1019.2L1741.0 1019.2L1741.5 1019.1L1742.0 1019.2L1742.6 1019.2L1743.1 1019.2L1743.6 1019.0L1744.1 1019.1L1744.7 1019.2L1745.2 1018.9L1745.7 1019.1L1746.2 1019.1L1746.8 1019.0L1747.3 1019.1L1747.8 1019.0L1748.3 1019.0L1748.9 1019.0L1749.4 1018.9L1749.9 1019.0L1750.4 1018.9L1751.0 1018.9L1751.5 1019.0L1752.0 1018.9L1752.5 1019.0L1753.1 1018.9L1753.6 1018.7L1754.1 1018.8L1754.6 1018.7L1755.2 1018.7L1755.7 1018.9L1756.2 1018.6L1756.7 1018.7L1757.3 1018.9L1757.8 1018.6L1758.3 1018.7L1758.8 1018.8L1759.4 1018.6L1759.9 1018.7L1760.4 1018.6L1760.9 1018.8L1761.5 1018.6L1762.0 1018.7L1762.5 1018.7L1763.0 1018.6L1763.6 1018.7L1764.1 1018.5L1764.6 1018.6L1765.1 1018.6L1765.7 1018.5L1766.2 1018.5L1766.7 1018.4L1767.2 1018.4L1767.8 1018.4L1768.3 1018.4L1768.8 1018.3L1769.3 1018.3L1769.9 1018.5L1770.4 1018.3L1770.9 1018.4L1771.4 1018.3L1772.0 1018.3L1772.5 1018.3L1773.0 1018.4L1773.5 1018.4L1774.1 1018.2L1774.6 1018.2L1775.1 1018.2L1775.6 1018.4L1776.2 1018.2L1776.7 1018.4L1777.2 1018.2L1777.7 1018.1L1778.3 1018.3L1778.8 1018.1L1779.3 1018.1L1779.8 1018.2L1780.4 1018.2L1780.9 1018.1L1781.4 1018.0L1781.9 1018.1L1782.5 1018.2L1783.0 1018.2L1783.5 1018.2L1784.0 1018.0L1784.6 1018.1L1785.1 1018.0L1785.6 1018.1L1786.1 1017.9L1786.7 1018.0L1787.2 1018.1L1787.7 1017.8L1788.2 1017.9L1788.8 1017.9L1789.3 1017.8L1789.8 1017.8L1790.3 1018.0L1790.9 1017.9L1791.4 1018.0L1791.9 1017.8L1792.4 1017.7L1792.9 1017.7L1793.5 1017.9L1794.0 1017.9L1794.5 1017.7L1795.0 1017.7L1795.6 1017.8L1796.1 1017.7L1796.6 1017.8L1797.1 1017.6L1797.7 1017.7L1798.2 1017.6L1798.7 1017.6L1799.2 1017.8L1799.8 1017.7L1800.3 1017.7L1800.8 1017.5L1801.3 1017.6L1801.9 1017.7L1802.4 1017.6L1802.9 1017.6L1803.4 1017.5L1804.0 1017.5L1804.5 1017.5L1805.0 1017.5L1805.5 1017.6L1806.1 1017.4L1806.6 1017.4L1807.1 1017.5L1807.6 1017.3L1808.2 1017.2L1808.7 1017.4L1809.2 1017.4L1809.7 1017.2L1810.3 1017.3L1810.8 1017.3L1811.3 1017.2L1811.8 1017.2L1812.4 1017.1L1812.9 1017.1L1813.4 1017.0L1813.9 1016.9L1814.5 1017.2L1815.0 1017.0L1815.5 1016.9L1816.0 1016.9L1816.6 1016.9L1817.1 1016.9L1817.6 1016.9L1818.1 1016.9L1818.7 1016.9L1819.2 1016.7L1819.7 1016.7L1820.2 1016.6L1820.8 1016.7L1821.3 1016.8L1821.8 1016.6L1822.3 1016.6L1822.9 1016.6L1823.4 1016.5L1823.9 1016.6L1824.4 1016.6L1825.0 1016.8L1825.5 1017.1L1826.0 1017.1L1826.5 1017.3L1827.1 1017.2L1827.6 1017.5L1828.1 1017.7L1828.6 1017.9L1829.2 1018.0L1829.7 1018.2L1830.2 1018.4L1830.7 1018.5L1831.3 1018.4L1831.8 1018.7L1832.3 1018.8L1832.8 1018.8L1833.4 1019.0L1833.9 1019.1L1834.4 1019.2L1834.9 1019.2L1835.5 1019.3L1836.0 1019.3L1836.5 1019.4L1837.0 1019.4L1837.6 1019.6L1838.1 1019.5L1838.6 1019.7L1839.1 1019.9L1839.7 1020.0L1840.2 1019.9L1840.7 1019.9L1841.2 1020.1L1841.8 1020.1L1842.3 1020.2L1842.8 1020.1L1843.3 1020.3L1843.9 1020.1L1844.4 1020.0L1844.9 1020.1L1845.4 1020.1L1846.0 1020.2L1846.5 1020.1L1847.0 1020.1L1847.5 1019.9L1848.1 1020.0L1848.6 1019.9L1849.1 1020.0L1849.6 1019.8L1850.2 1019.7L1850.7 1019.8L1851.2 1019.9L1851.7 1019.7L1852.3 1019.6L1852.8 1019.7L1853.3 1019.8L1853.8 1019.6L1854.4 1019.6L1854.9 1019.7L1855.4 1019.7L1855.9 1019.7L1856.5 1019.6L1857.0 1019.5L1857.5 1019.5L1858.0 1019.4L1858.6 1019.6L1859.1 1019.6L1859.6 1019.4" fill="none" stroke="#55b85f" stroke-width="1.6" stroke-linejoin="round"/></svg>
</div>
</body>
</html>
